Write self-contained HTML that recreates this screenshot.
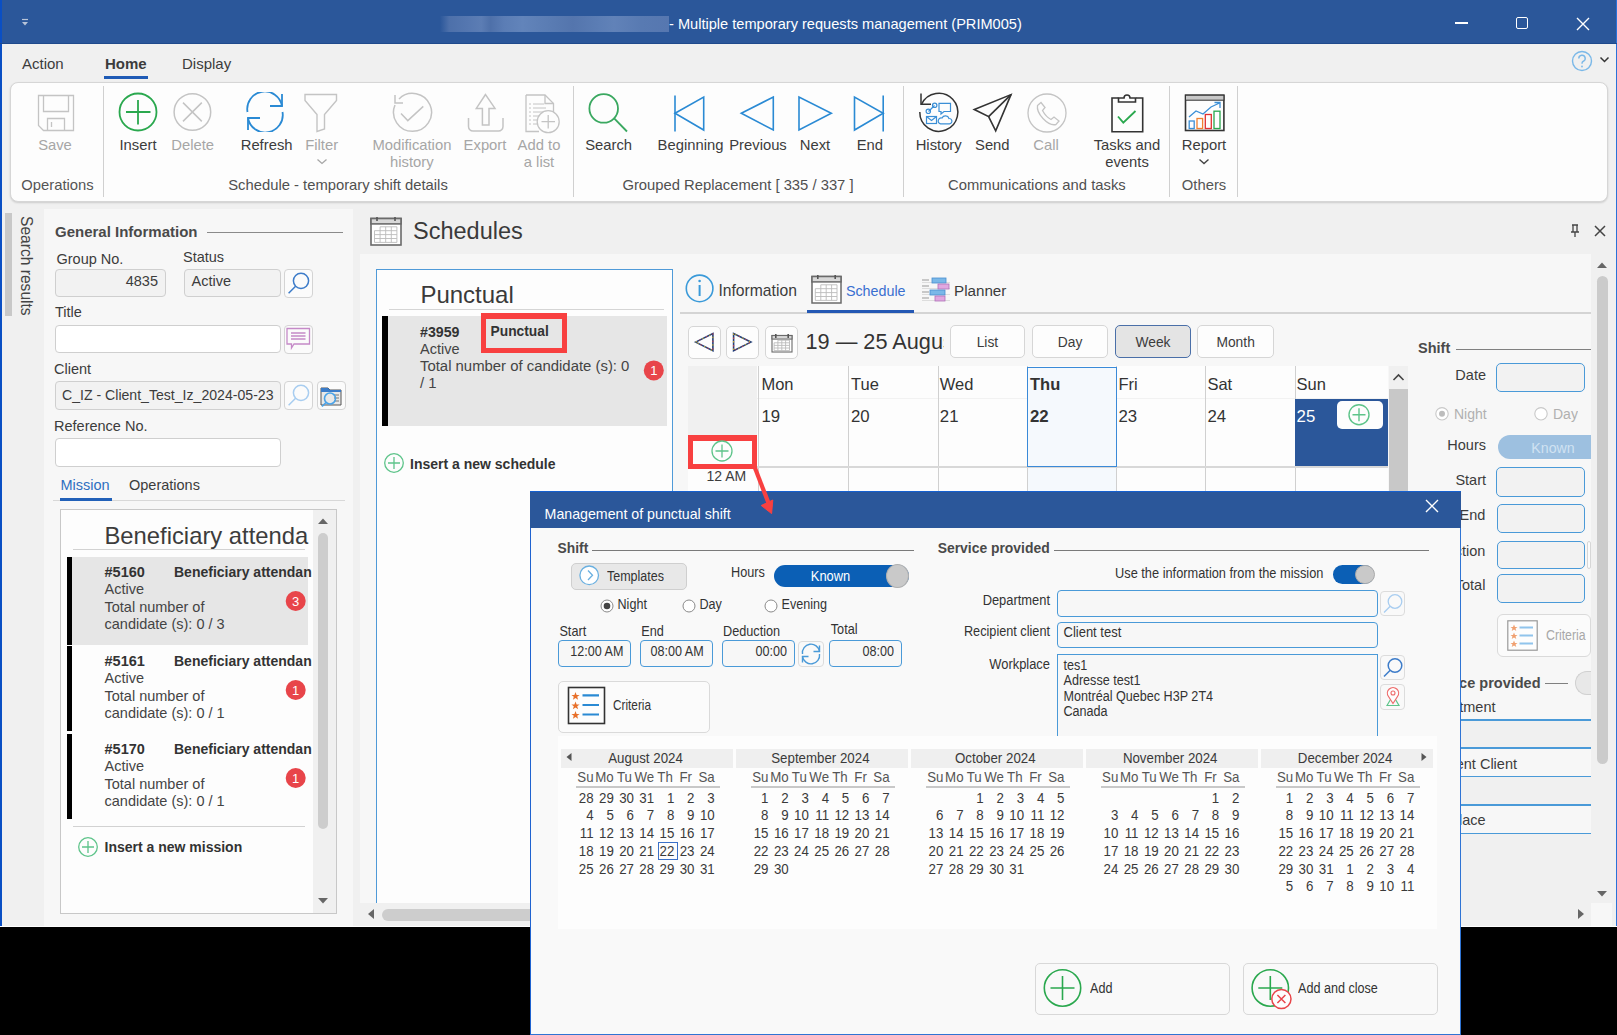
<!DOCTYPE html><html><head><meta charset="utf-8"><style>
html,body{margin:0;padding:0;}
body{width:1617px;height:1035px;position:relative;overflow:hidden;background:#000;font-family:"Liberation Sans",sans-serif;}
.a{position:absolute;box-sizing:border-box;}
.t{position:absolute;white-space:nowrap;line-height:1;}
</style></head><body>
<div class="a" style="left:0px;top:0px;width:1617px;height:927px;background:#f0f0f0;"></div>
<div class="a" style="left:0px;top:0px;width:1617px;height:44px;background:#2b579a;"></div>
<div class="a" style="left:0px;top:0px;width:2px;height:927px;background:#0a4fc4;"></div>
<div class="a" style="left:1616px;top:0px;width:1px;height:927px;background:#2a72d8;"></div>
<div class="a" style="left:0px;top:43px;width:1617px;height:1px;background:#1f4a8c;"></div>
<div class="a" style="left:0px;top:926px;width:1617px;height:1px;background:#fff;"></div>
<svg class="a" style="left:19px;top:17px;" width="12" height="12" viewBox="0 0 12 12"><path d="M3 2.5H9" stroke="#b8c4d8" stroke-width="1.2"/><path d="M3 5L6 8.5L9 5Z" fill="#b8c4d8"/></svg>
<div class="a" style="left:440px;top:15.6px;width:229px;height:16px;background:linear-gradient(90deg,rgba(43,87,154,1) 0%,#4d70aa 4%,#5577b0 12%,#5c7db4 18%,#4e70a9 22%,#5b7db5 28%,#6284ba 36%,#5a7cb3 48%,#5475ad 58%,#5c7eb5 70%,#6182b8 76%,#587ab2 88%,#5677b0 100%);"></div>
<div class="t" style="left:669px;top:16.64px;font-size:14.6px;color:#ffffff;">- Multiple temporary requests management (PRIM005)</div>
<div class="a" style="left:1455.3px;top:22px;width:12.3px;height:1.5px;background:#fff;"></div>
<div class="a" style="left:1516.3px;top:17.3px;width:12.2px;height:11.6px;border:1.4px solid #fff;border-radius:2px;"></div>
<svg class="a" style="left:1576px;top:16.5px;" width="14" height="14" viewBox="0 0 14 14"><path d="M1 1L13 13M13 1L1 13" stroke="#fff" stroke-width="1.4"/></svg>
<div class="t" style="left:22px;top:56.30px;font-size:15px;color:#3c3c3c;">Action</div>
<div class="t" style="left:105px;top:56.30px;font-size:15px;color:#3c3c3c;font-weight:bold;">Home</div>
<div class="a" style="left:104px;top:76px;width:44px;height:3px;background:#1f5bb6;"></div>
<div class="t" style="left:182px;top:56.30px;font-size:15px;color:#3c3c3c;">Display</div>
<div class="a" style="left:10px;top:82px;width:1598px;height:120px;background:#fdfdfd;border:1px solid #d6d6d6;border-radius:8px;box-shadow:0 1px 2px rgba(0,0,0,0.15);"></div>
<div class="a" style="left:103px;top:86px;width:1px;height:111px;background:#d0d0d0;"></div>
<div class="a" style="left:573px;top:86px;width:1px;height:111px;background:#d0d0d0;"></div>
<div class="a" style="left:903px;top:86px;width:1px;height:111px;background:#d0d0d0;"></div>
<div class="a" style="left:1169px;top:86px;width:1px;height:111px;background:#d0d0d0;"></div>
<div class="a" style="left:1237px;top:86px;width:1px;height:111px;background:#d0d0d0;"></div>
<svg class="a" style="left:36px;top:93px;" width="40" height="40" viewBox="0 0 40 40"><g fill="none" stroke="#c4c4c4" stroke-width="1.3"><path d="M2.5 2.5H37.5V37.5H7.5L2.5 32.5Z"/><path d="M7.5 2.5V18.5H32.5V2.5"/><path d="M11.5 37.5V25.5H28.5V37.5"/><path d="M15.5 29V34"/></g></svg>
<div class="t" style="left:-345px;width:800px;text-align:center;top:137.97px;font-size:14.8px;color:#a6a6a6;">Save</div>
<svg class="a" style="left:118px;top:92px;" width="40" height="40" viewBox="0 0 40 40"><g fill="none" stroke="#2aa84e" stroke-width="1.8"><circle cx="20" cy="20" r="18.5"/><path d="M8 20H32.5M20 8V32.5"/></g></svg>
<div class="t" style="left:-262px;width:800px;text-align:center;top:137.97px;font-size:14.8px;color:#3c3c3c;">Insert</div>
<svg class="a" style="left:172px;top:92px;" width="40" height="40" viewBox="0 0 40 40"><g fill="none" stroke="#c4c4c4" stroke-width="1.5"><circle cx="20.4" cy="20" r="18.3"/><path d="M11 10.6L29.8 29.4M29.8 10.6L11 29.4"/></g></svg>
<div class="t" style="left:-207.3px;width:800px;text-align:center;top:137.97px;font-size:14.8px;color:#a6a6a6;">Delete</div>
<svg class="a" style="left:245px;top:92px;" width="40" height="40" viewBox="0 0 40 40"><g fill="none" stroke="#2a8ad4" stroke-width="1.8"><path d="M2.5 20A17.5 17.5 0 0 1 37 14"/><path d="M37 2V14H25"/><path d="M37.5 20A17.5 17.5 0 0 1 3 26"/><path d="M3 38V26H15"/></g></svg>
<div class="t" style="left:-133.39999999999998px;width:800px;text-align:center;top:137.97px;font-size:14.8px;color:#3c3c3c;">Refresh</div>
<svg class="a" style="left:303px;top:92px;" width="36" height="42" viewBox="0 0 36 42"><g fill="none" stroke="#c4c4c4" stroke-width="1.4"><path d="M2 2.5H33.5V8.5L21.5 22.5V37L14 39.5V22.5L2 8.5Z"/></g></svg>
<div class="t" style="left:-78.30000000000001px;width:800px;text-align:center;top:137.97px;font-size:14.8px;color:#a6a6a6;">Filter</div>
<svg class="a" style="left:316px;top:158px;" width="12" height="7" viewBox="0 0 12 7"><path d="M1.5 1.5L6 5.5L10.5 1.5" fill="none" stroke="#a6a6a6" stroke-width="1.3"/></svg>
<svg class="a" style="left:390px;top:92px;" width="44" height="44" viewBox="0 0 44 44"><g fill="none" stroke="#c4c4c4" stroke-width="1.5"><path d="M9 7A19 19 0 1 1 5 13"/><path d="M5 3V11H13"/><path d="M11 21.5L17.8 28.6L33.3 14.4"/></g></svg>
<div class="t" style="left:11.899999999999977px;width:800px;text-align:center;top:137.97px;font-size:14.8px;color:#a6a6a6;">Modification</div>
<div class="t" style="left:11.899999999999977px;width:800px;text-align:center;top:154.97px;font-size:14.8px;color:#a6a6a6;">history</div>
<svg class="a" style="left:466px;top:92px;" width="40" height="42" viewBox="0 0 40 42"><g fill="none" stroke="#c4c4c4" stroke-width="1.5"><path d="M2.5 26V34.5A4.5 4.5 0 0 0 7 39H32.5A4.5 4.5 0 0 0 37 34.5V26"/><path d="M19.5 2.5L10.3 16.4H16.4V33H23V16.4H29Z"/></g></svg>
<div class="t" style="left:85px;width:800px;text-align:center;top:137.97px;font-size:14.8px;color:#a6a6a6;">Export</div>
<svg class="a" style="left:524px;top:93px;" width="42" height="42" viewBox="0 0 42 42"><g fill="none" stroke="#c4c4c4" stroke-width="1.3"><path d="M2 2H21L29.5 10.5V26"/><path d="M21 2V10.5H29.5"/><path d="M2 2V38.5H15"/><path d="M5 11H7M5 15H7M5 19H7M5 23H7M5 27H7M5 31H7M9 11H20M9 15H22M9 19H22M9 23H17M9 27H14M9 31H14" stroke-width="1"/><circle cx="24.2" cy="28.7" r="11" fill="#fdfdfd"/><path d="M17.5 28.7H31M24.2 22V35.5"/></g></svg>
<div class="t" style="left:139px;width:800px;text-align:center;top:137.97px;font-size:14.8px;color:#a6a6a6;">Add to</div>
<div class="t" style="left:139px;width:800px;text-align:center;top:154.97px;font-size:14.8px;color:#a6a6a6;">a list</div>
<div class="t" style="left:-342.5px;width:800px;text-align:center;top:177.97px;font-size:14.8px;color:#555;">Operations</div>

<div class="t" style="left:-62px;width:800px;text-align:center;top:177.97px;font-size:14.8px;color:#505050;">Schedule - temporary shift details</div>
<svg class="a" style="left:586px;top:92px;" width="44" height="42" viewBox="0 0 44 42"><g fill="none" stroke="#3aa860" stroke-width="1.8"><circle cx="17.7" cy="16.4" r="14.3"/><path d="M28.2 26.4L41 39.5"/></g></svg>
<div class="t" style="left:208.60000000000002px;width:800px;text-align:center;top:137.97px;font-size:14.8px;color:#3c3c3c;">Search</div>
<svg class="a" style="left:670px;top:92px;" width="40" height="42" viewBox="0 0 40 42"><g fill="none" stroke="#2a8ad4" stroke-width="1.6"><path d="M5 3.5V39.5"/><path d="M5 21.3L33.7 5V38Z"/></g></svg>
<div class="t" style="left:290.5px;width:800px;text-align:center;top:137.97px;font-size:14.8px;color:#3c3c3c;">Beginning</div>
<svg class="a" style="left:736px;top:92px;" width="42" height="42" viewBox="0 0 42 42"><g fill="none" stroke="#2a8ad4" stroke-width="1.6"><path d="M5.3 21.3L37.3 5V38Z"/></g></svg>
<div class="t" style="left:358px;width:800px;text-align:center;top:137.97px;font-size:14.8px;color:#3c3c3c;">Previous</div>
<svg class="a" style="left:794px;top:92px;" width="42" height="42" viewBox="0 0 42 42"><g fill="none" stroke="#2a8ad4" stroke-width="1.6"><path d="M5 5V38L37.3 21.3Z"/></g></svg>
<div class="t" style="left:415px;width:800px;text-align:center;top:137.97px;font-size:14.8px;color:#3c3c3c;">Next</div>
<svg class="a" style="left:850px;top:92px;" width="40" height="42" viewBox="0 0 40 42"><g fill="none" stroke="#2a8ad4" stroke-width="1.6"><path d="M33.2 3.5V39.5"/><path d="M4.5 5V38L33.2 21.3Z"/></g></svg>
<div class="t" style="left:469.79999999999995px;width:800px;text-align:center;top:137.97px;font-size:14.8px;color:#3c3c3c;">End</div>
<div class="t" style="left:338px;width:800px;text-align:center;top:177.97px;font-size:14.8px;color:#505050;">Grouped Replacement [ 335 / 337 ]</div>
<svg class="a" style="left:916px;top:91px;" width="46" height="46" viewBox="0 0 46 46"><g fill="none" stroke="#333" stroke-width="1.5"><path d="M5.6 13.2A19 19 0 1 1 3.8 21"/><path d="M5 2.5V13.3H15"/></g><g fill="none" stroke="#3b8fd6" stroke-width="1.2"><path d="M12.5 20.5L18.5 14.5"/><circle cx="12.3" cy="20.3" r="2.2"/><circle cx="18.7" cy="14.3" r="2.2"/><path d="M23 12.3H34.5V20.5H28L25 23V20.5H23Z"/><rect x="10.5" y="25.5" width="10" height="7"/><path d="M10.5 25.5L15.5 29.5L20.5 25.5"/><path d="M24.5 32.8H33.5A2.6 2.6 0 0 0 33 27.5A3.8 3.8 0 0 0 26 27A2.9 2.9 0 0 0 24.5 32.8Z"/></g></svg>
<div class="t" style="left:538.7px;width:800px;text-align:center;top:137.97px;font-size:14.8px;color:#3c3c3c;">History</div>
<svg class="a" style="left:972px;top:92px;" width="42" height="42" viewBox="0 0 42 42"><g fill="none" stroke="#333" stroke-width="1.6" stroke-linejoin="miter"><path d="M2.3 17.5L39 2.6L23.7 38.9L16.6 24.6Z"/><path d="M16.6 24.6L39 2.6"/></g></svg>
<div class="t" style="left:592.3px;width:800px;text-align:center;top:137.97px;font-size:14.8px;color:#3c3c3c;">Send</div>
<svg class="a" style="left:1026px;top:92px;" width="42" height="42" viewBox="0 0 42 42"><g fill="none" stroke="#c4c4c4" stroke-width="1.3"><circle cx="21" cy="21" r="19"/><path d="M11.5 13.5L15 10.5L19 15.5L16.5 18.5Q20 25 25 27.5L28 25L33 29L30 32.5Q24 34 17 26.5Q10.5 19.5 11.5 13.5Z"/></g></svg>
<div class="t" style="left:646px;width:800px;text-align:center;top:137.97px;font-size:14.8px;color:#a6a6a6;">Call</div>
<svg class="a" style="left:1108px;top:91px;" width="38" height="44" viewBox="0 0 38 44"><g fill="none" stroke="#333" stroke-width="1.6"><path d="M10.5 7H4V40.8H34.7V7H28"/><path d="M10.5 7V11H27.5V7H22A3 3 0 0 0 16 7Z"/></g><path d="M10 25.5L15.3 31.7L27.5 20" fill="none" stroke="#2aa84e" stroke-width="1.8"/></svg>
<div class="t" style="left:727px;width:800px;text-align:center;top:137.97px;font-size:14.8px;color:#3c3c3c;">Tasks and</div>
<div class="t" style="left:727px;width:800px;text-align:center;top:154.97px;font-size:14.8px;color:#3c3c3c;">events</div>
<div class="t" style="left:636.9000000000001px;width:800px;text-align:center;top:177.97px;font-size:14.8px;color:#505050;">Communications and tasks</div>
<svg class="a" style="left:1183px;top:92px;" width="44" height="42" viewBox="0 0 44 42"><rect x="2.5" y="3.2" width="38.4" height="35.3" fill="none" stroke="#333" stroke-width="1.6"/><rect x="2.5" y="3.2" width="38.4" height="5" fill="#c8c8c8" stroke="#333" stroke-width="1"/><rect x="6.2" y="29" width="5" height="7.5" fill="none" stroke="#3b8fd6" stroke-width="1.3"/><rect x="14" y="26.5" width="5.6" height="10" fill="none" stroke="#f08030" stroke-width="1.3"/><rect x="22.3" y="22.5" width="6" height="14" fill="none" stroke="#e03030" stroke-width="1.3"/><rect x="31" y="19.2" width="6" height="17.3" fill="none" stroke="#2aa84e" stroke-width="1.3"/><path d="M6 25L13 19L20 22L28 15L36.5 11M31.5 10.5H37V16" fill="none" stroke="#3b8fd6" stroke-width="1.3"/></svg>
<div class="t" style="left:804px;width:800px;text-align:center;top:137.97px;font-size:14.8px;color:#3c3c3c;">Report</div>
<svg class="a" style="left:1198px;top:158px;" width="12" height="7" viewBox="0 0 12 7"><path d="M1.5 1.5L6 5.5L10.5 1.5" fill="none" stroke="#444" stroke-width="1.4"/></svg>
<div class="t" style="left:804px;width:800px;text-align:center;top:177.97px;font-size:14.8px;color:#555;">Others</div>
<svg class="a" style="left:1571px;top:50px;" width="22" height="22" viewBox="0 0 22 22"><circle cx="11" cy="11" r="9.5" fill="none" stroke="#7ab8e8" stroke-width="1.4"/><path d="M7.8 8.5A3.2 3.2 0 1 1 12 11.5Q11 12 11 13.8" fill="none" stroke="#7ab8e8" stroke-width="1.4"/><circle cx="11" cy="16.5" r="0.9" fill="#7ab8e8"/></svg>
<svg class="a" style="left:1599px;top:56px;" width="12" height="8" viewBox="0 0 12 8"><path d="M1.5 1.5L5.5 5.5L9.5 1.5" fill="none" stroke="#333" stroke-width="1.5"/></svg>
<div class="a" style="left:44px;top:209px;width:309px;height:717px;background:#f7f7f7;"></div>
<div class="a" style="left:5px;top:212.5px;width:7px;height:103px;background:#c8c8c8;"></div>
<div class="a" style="left:360px;top:254px;width:1231px;height:672px;background:#f7f7f7;"></div>
<div class="t" style="left:26px;top:216px;font-size:15.6px;color:#444;transform-origin:0 0;transform:rotate(90deg) translate(0,-7.5px);">Search results</div>
<div class="t" style="left:55px;top:224.30px;font-size:15px;color:#4a4a4a;font-weight:bold;">General Information</div>
<div class="a" style="left:207px;top:232px;width:136px;height:1px;background:#8a8a8a;"></div>
<div class="t" style="left:56.5px;top:251.73px;font-size:14.5px;color:#3c3c3c;">Group No.</div>
<div class="t" style="left:183px;top:249.73px;font-size:14.5px;color:#3c3c3c;">Status</div>
<div class="a" style="left:55px;top:269px;width:111px;height:28px;background:#f2f2f2;border:1px solid #cfcfcf;border-radius:4px;"></div>
<div class="t" style="right:1459px;top:274.23px;font-size:14.5px;color:#3c3c3c;">4835</div>
<div class="a" style="left:184px;top:269px;width:97px;height:28px;background:#f2f2f2;border:1px solid #cfcfcf;border-radius:4px;"></div>
<div class="t" style="left:191.5px;top:274.23px;font-size:14.5px;color:#3c3c3c;">Active</div>
<div class="a" style="left:284px;top:269px;width:29px;height:29px;background:#fbfbfb;border:1px solid #d4d4d4;border-radius:4px;"></div>
<svg class="a" style="left:284.5px;top:269.5px;" width="28" height="28" viewBox="0 0 28 28"><g fill="none" stroke="#3d7cc9" stroke-width="1.5"><circle cx="16" cy="10.8" r="7.6"/><path d="M10.6 16.2L3.6 23.3"/></g></svg>
<div class="t" style="left:55px;top:305.23px;font-size:14.5px;color:#3c3c3c;">Title</div>
<div class="a" style="left:55px;top:325px;width:226px;height:28px;background:#ffffff;border:1px solid #cfcfcf;border-radius:4px;"></div>
<div class="a" style="left:284px;top:325px;width:29px;height:29px;background:#fbfbfb;border:1px solid #d4d4d4;border-radius:4px;"></div>
<svg class="a" style="left:284px;top:325px;" width="29" height="29" viewBox="0 0 29 29"><g fill="none" stroke="#c58ac8" stroke-width="1.3"><path d="M3 3.5H25.5V19H10L7.5 23V19H3Z"/><path d="M7 8H21.5M7 11H21.5M7 14H21.5" stroke-width="1.6"/></g></svg>
<div class="t" style="left:54px;top:361.73px;font-size:14.5px;color:#3c3c3c;">Client</div>
<div class="a" style="left:55px;top:381px;width:226px;height:29px;background:#f2f2f2;border:1px solid #cfcfcf;border-radius:4px;"></div>
<div class="t" style="left:62px;top:387.56px;font-size:14.1px;color:#3c3c3c;">C_IZ - Client_Test_Iz_2024-05-23</div>
<div class="a" style="left:284px;top:381px;width:29px;height:29px;background:#fbfbfb;border:1px solid #d4d4d4;border-radius:4px;"></div>
<svg class="a" style="left:284.5px;top:381.5px;" width="28" height="28" viewBox="0 0 28 28"><g fill="none" stroke="#a8cdf0" stroke-width="1.5"><circle cx="16" cy="10.8" r="7.6"/><path d="M10.6 16.2L3.6 23.3"/></g></svg>
<div class="a" style="left:316.5px;top:381px;width:29px;height:29px;background:#fbfbfb;border:1px solid #d4d4d4;border-radius:4px;"></div>
<svg class="a" style="left:316.5px;top:381.5px;" width="29" height="29" viewBox="0 0 29 29"><path d="M4 6H11L13 8H24V23H4Z" fill="#e8e8e8" stroke="#555" stroke-width="1"/><path d="M4 6H11L13 8H24V10H4Z" fill="#3b7cc9"/><path d="M17 13H22M17 16H22M17 19H22" stroke="#777" stroke-width="1"/><circle cx="13" cy="16.5" r="5.5" fill="none" stroke="#4aa3e8" stroke-width="1.6"/><path d="M9 20.5L5 24.5" stroke="#4aa3e8" stroke-width="1.6"/></svg>
<div class="t" style="left:54px;top:419.23px;font-size:14.5px;color:#3c3c3c;">Reference No.</div>
<div class="a" style="left:55px;top:438px;width:226px;height:29px;background:#ffffff;border:1px solid #cfcfcf;border-radius:4px;"></div>
<div class="t" style="left:60.5px;top:478.23px;font-size:14.5px;color:#2f6fc0;">Mission</div>
<div class="t" style="left:129px;top:478.23px;font-size:14.5px;color:#3c3c3c;">Operations</div>
<div class="a" style="left:52.5px;top:500px;width:292px;height:1px;background:#d8d8d8;"></div>
<div class="a" style="left:60px;top:498px;width:52px;height:2.5px;background:#2160b8;"></div>
<div class="a" style="left:60px;top:509px;width:277px;height:405px;background:#fdfdfd;border:1px solid #c8c8c8;"></div>
<div class="a" style="left:313px;top:510px;width:23px;height:403px;background:#f0f0f0;"></div>
<svg class="a" style="left:316px;top:516px;" width="14" height="10" viewBox="0 0 14 10"><path d="M2 8L7 2.5L12 8Z" fill="#666"/></svg>
<div class="a" style="left:318px;top:533px;width:10px;height:296px;background:#cdcdcd;border-radius:5px;"></div>
<svg class="a" style="left:316px;top:896px;" width="14" height="10" viewBox="0 0 14 10"><path d="M2 2L7 7.5L12 2Z" fill="#666"/></svg>
<div class="t" style="left:104.5px;top:524.35px;font-size:23.8px;color:#3c3c3c;width:208px;overflow:hidden;padding-bottom:5px;">Beneficiary attenda</div>
<div class="a" style="left:73px;top:549px;width:232px;height:1px;background:#d2d2d2;"></div>
<div class="a" style="left:72px;top:556.5px;width:236px;height:88px;background:#e6e6e6;"></div>
<div class="a" style="left:66.5px;top:556.5px;width:5.5px;height:88px;background:#000;"></div>
<div class="t" style="left:104.5px;top:564.73px;font-size:14.5px;color:#333;font-weight:bold;">#5160</div>
<div class="t" style="left:174px;top:565.15px;font-size:14px;color:#333;font-weight:bold;width:138px;overflow:hidden;padding-bottom:5px;">Beneficiary attendan</div>
<div class="t" style="left:104.5px;top:582.43px;font-size:14.5px;color:#444;">Active</div>
<div class="t" style="left:104.5px;top:599.73px;font-size:14.5px;color:#444;">Total number of</div>
<div class="t" style="left:104.5px;top:616.73px;font-size:14.5px;color:#444;">candidate (s): 0 / 3</div>
<svg class="a" style="left:285px;top:591.0px;" width="22" height="22" viewBox="0 0 22 22"><circle cx="10.7" cy="10" r="10" fill="#e8454a"/><text x="10.7" y="14.6" font-size="13" font-family="Liberation Sans" fill="#fff" text-anchor="middle">3</text></svg>
<div class="a" style="left:66.5px;top:645.5px;width:5.5px;height:85.5px;background:#000;"></div>
<div class="t" style="left:104.5px;top:653.73px;font-size:14.5px;color:#333;font-weight:bold;">#5161</div>
<div class="t" style="left:174px;top:654.15px;font-size:14px;color:#333;font-weight:bold;width:138px;overflow:hidden;padding-bottom:5px;">Beneficiary attendan</div>
<div class="t" style="left:104.5px;top:671.43px;font-size:14.5px;color:#444;">Active</div>
<div class="t" style="left:104.5px;top:688.73px;font-size:14.5px;color:#444;">Total number of</div>
<div class="t" style="left:104.5px;top:705.73px;font-size:14.5px;color:#444;">candidate (s): 0 / 1</div>
<svg class="a" style="left:285px;top:680.0px;" width="22" height="22" viewBox="0 0 22 22"><circle cx="10.7" cy="10" r="10" fill="#e8454a"/><text x="10.7" y="14.6" font-size="13" font-family="Liberation Sans" fill="#fff" text-anchor="middle">1</text></svg>
<div class="a" style="left:66.5px;top:733.5px;width:5.5px;height:85.5px;background:#000;"></div>
<div class="t" style="left:104.5px;top:741.73px;font-size:14.5px;color:#333;font-weight:bold;">#5170</div>
<div class="t" style="left:174px;top:742.15px;font-size:14px;color:#333;font-weight:bold;width:138px;overflow:hidden;padding-bottom:5px;">Beneficiary attendan</div>
<div class="t" style="left:104.5px;top:759.43px;font-size:14.5px;color:#444;">Active</div>
<div class="t" style="left:104.5px;top:776.73px;font-size:14.5px;color:#444;">Total number of</div>
<div class="t" style="left:104.5px;top:793.73px;font-size:14.5px;color:#444;">candidate (s): 0 / 1</div>
<svg class="a" style="left:285px;top:768.0px;" width="22" height="22" viewBox="0 0 22 22"><circle cx="10.7" cy="10" r="10" fill="#e8454a"/><text x="10.7" y="14.6" font-size="13" font-family="Liberation Sans" fill="#fff" text-anchor="middle">1</text></svg>
<div class="a" style="left:73px;top:826px;width:232px;height:1px;background:#d2d2d2;"></div>
<svg class="a" style="left:77px;top:836px;" width="22" height="22" viewBox="0 0 22 22"><g fill="none" stroke="#5ec48a" stroke-width="1.3"><circle cx="11" cy="11" r="9.3"/><path d="M5 11H17M11 5V17"/></g></svg>
<div class="t" style="left:104.5px;top:839.65px;font-size:14px;color:#333;font-weight:bold;">Insert a new mission</div>
<svg class="a" style="left:370px;top:216px;" width="32" height="30" viewBox="0 0 32 30"><rect x="1" y="2.5" width="30" height="26.5" fill="#fff" stroke="#6a6a6a" stroke-width="1.6"/><rect x="1" y="2.5" width="30" height="5.4" fill="#d8d8d8" stroke="#6a6a6a" stroke-width="1.6"/><path d="M7.0 1V5M25.0 1V5" stroke="#555" stroke-width="1.6"/><path d="M4.5 14.7V26.4" stroke="#bbb" stroke-width="0.9"/><path d="M10.1 10.8V26.4" stroke="#bbb" stroke-width="0.9"/><path d="M15.7 10.8V26.4" stroke="#bbb" stroke-width="0.9"/><path d="M21.3 10.8V26.4" stroke="#bbb" stroke-width="0.9"/><path d="M26.9 10.8V26.4" stroke="#bbb" stroke-width="0.9"/><path d="M10.1 10.8H26.9" stroke="#bbb" stroke-width="0.9"/><path d="M4.5 14.7H26.9" stroke="#bbb" stroke-width="0.9"/><path d="M4.5 18.6H26.9" stroke="#bbb" stroke-width="0.9"/><path d="M4.5 22.5H26.9" stroke="#bbb" stroke-width="0.9"/><path d="M4.5 26.4H26.9" stroke="#bbb" stroke-width="0.9"/></svg>
<div class="t" style="left:413px;top:220.11px;font-size:23.5px;color:#3a3a3a;">Schedules</div>
<div class="a" style="left:375.5px;top:268.5px;width:297.5px;height:640px;background:#fdfdfd;border:1px solid #4f9ad8;"></div>
<div class="t" style="left:420.4px;top:282.68px;font-size:24px;color:#3a3a3a;">Punctual</div>
<div class="a" style="left:388.5px;top:308.5px;width:275px;height:1.2px;background:#d5d5d5;"></div>
<div class="a" style="left:387.5px;top:316px;width:279.5px;height:109.5px;background:#e6e6e6;"></div>
<div class="a" style="left:382px;top:316px;width:5.5px;height:109.5px;background:#000;"></div>
<div class="t" style="left:420px;top:324.98px;font-size:14.2px;color:#333;font-weight:bold;">#3959</div>
<div class="t" style="left:490.5px;top:325.12px;font-size:13.8px;color:#333;font-weight:bold;">Punctual</div>
<div class="a" style="left:481px;top:313px;width:86px;height:39.7px;border:5px solid #f84040;border-top-width:6px;"></div>
<div class="t" style="left:420px;top:341.73px;font-size:14.5px;color:#444;">Active</div>
<div class="t" style="left:420px;top:358.99px;font-size:14.9px;color:#444;">Total number of candidate (s): 0</div>
<div class="t" style="left:420px;top:375.99px;font-size:14.9px;color:#444;">/ 1</div>
<svg class="a" style="left:643px;top:360px;" width="22" height="22" viewBox="0 0 22 22"><circle cx="10.8" cy="10.4" r="10" fill="#e8454a"/><text x="10.8" y="15" font-size="13" font-family="Liberation Sans" fill="#fff" text-anchor="middle">1</text></svg>
<svg class="a" style="left:383px;top:452px;" width="22" height="22" viewBox="0 0 22 22"><g fill="none" stroke="#5ec48a" stroke-width="1.3"><circle cx="11" cy="11" r="9.3"/><path d="M5 11H17M11 5V17"/></g></svg>
<div class="t" style="left:410px;top:457.15px;font-size:14px;color:#333;font-weight:bold;">Insert a new schedule</div>
<div class="a" style="left:360px;top:903px;width:1231px;height:23px;background:#f0f0f0;"></div>
<svg class="a" style="left:364px;top:906px;" width="14" height="16" viewBox="0 0 14 16"><path d="M10 3L4 8L10 13Z" fill="#666"/></svg>
<div class="a" style="left:382px;top:909px;width:800px;height:11.5px;background:#cdcdcd;border-radius:6px;"></div>
<svg class="a" style="left:1574px;top:906px;" width="14" height="16" viewBox="0 0 14 16"><path d="M4 3L10 8L4 13Z" fill="#666"/></svg>
<svg class="a" style="left:685px;top:274px;" width="29" height="29" viewBox="0 0 29 29"><circle cx="14.6" cy="14.4" r="13.3" fill="none" stroke="#3a9ad9" stroke-width="1.6"/><circle cx="14.6" cy="7" r="1.3" fill="#3a9ad9"/><path d="M14.6 11V22" stroke="#3a9ad9" stroke-width="2"/></svg>
<div class="t" style="left:718.4px;top:282.71px;font-size:15.7px;color:#3c3c3c;">Information</div>
<svg class="a" style="left:811px;top:274px;" width="31" height="30" viewBox="0 0 31 30"><rect x="1" y="2.5" width="29" height="26.5" fill="#fff" stroke="#6a6a6a" stroke-width="1.5"/><rect x="1" y="2.5" width="29" height="5.4" fill="#d8d8d8" stroke="#6a6a6a" stroke-width="1.5"/><path d="M6.8 1V5M24.2 1V5" stroke="#555" stroke-width="1.6"/><path d="M4.3 14.7V26.4" stroke="#bbb" stroke-width="0.9"/><path d="M9.8 10.8V26.4" stroke="#bbb" stroke-width="0.9"/><path d="M15.2 10.8V26.4" stroke="#bbb" stroke-width="0.9"/><path d="M20.6 10.8V26.4" stroke="#bbb" stroke-width="0.9"/><path d="M26.0 10.8V26.4" stroke="#bbb" stroke-width="0.9"/><path d="M9.8 10.8H26.0" stroke="#bbb" stroke-width="0.9"/><path d="M4.3 14.7H26.0" stroke="#bbb" stroke-width="0.9"/><path d="M4.3 18.6H26.0" stroke="#bbb" stroke-width="0.9"/><path d="M4.3 22.5H26.0" stroke="#bbb" stroke-width="0.9"/><path d="M4.3 26.4H26.0" stroke="#bbb" stroke-width="0.9"/></svg>
<div class="t" style="left:845.9px;top:283.90px;font-size:14.3px;color:#3a6fd0;">Schedule</div>
<svg class="a" style="left:921px;top:277px;" width="30" height="26" viewBox="0 0 30 26"><g stroke="#999" stroke-width="1"><path d="M1 3H8M1 9H8M1 15H8M1 21H8"/><path d="M1 5.5H29M1 11.5H29M1 17.5H29M1 23.5H29" stroke="#ddd"/></g><rect x="11" y="1" width="14" height="5" fill="#7ab8e8" stroke="#4a90d0" stroke-width="0.8"/><rect x="17" y="7" width="11" height="5" fill="#e0a8e0" stroke="#b070b8" stroke-width="0.8"/><rect x="9" y="13" width="15" height="5" fill="#7ab8e8" stroke="#4a90d0" stroke-width="0.8"/><rect x="14" y="19" width="10" height="5" fill="#e0a8e0" stroke="#b070b8" stroke-width="0.8"/></svg>
<div class="t" style="left:954px;top:283.13px;font-size:15.2px;color:#3c3c3c;">Planner</div>
<div class="a" style="left:680px;top:312px;width:911px;height:1.5px;background:#d4d4d4;"></div>
<div class="a" style="left:806.5px;top:309.5px;width:107.5px;height:3.5px;background:#2458b4;"></div>
<div class="a" style="left:687.8px;top:325.5px;width:33px;height:33px;background:#fdfdfd;border:1px solid #d6d6d6;border-radius:5px;"></div>
<div class="a" style="left:726.4px;top:325.5px;width:33px;height:33px;background:#fdfdfd;border:1px solid #d6d6d6;border-radius:5px;"></div>
<div class="a" style="left:765.2px;top:325.5px;width:33px;height:33px;background:#fdfdfd;border:1px solid #d6d6d6;border-radius:5px;"></div>
<svg class="a" style="left:688px;top:326px;" width="33" height="33" viewBox="0 0 33 33"><path d="M7.6 16.1L24.9 7.5V24.8Z" fill="none" stroke="#24407a" stroke-width="1.6"/><path d="M7.6 16.1L24.9 7.5V24.8Z" fill="none" stroke="#d8b020" stroke-width="1" stroke-dasharray="1.5 6"/><path d="M7.6 16.1L24.9 7.5V24.8Z" fill="none" stroke="#d04040" stroke-width="1" stroke-dasharray="1.5 6" stroke-dashoffset="3.5"/></svg>
<svg class="a" style="left:726.4px;top:326px;" width="33" height="33" viewBox="0 0 33 33"><path d="M7.6 7.5V24.8L24.9 16.1Z" fill="none" stroke="#24407a" stroke-width="1.6"/><path d="M7.6 7.5V24.8L24.9 16.1Z" fill="none" stroke="#d8b020" stroke-width="1" stroke-dasharray="1.5 6"/><path d="M7.6 7.5V24.8L24.9 16.1Z" fill="none" stroke="#d04040" stroke-width="1" stroke-dasharray="1.5 6" stroke-dashoffset="3.5"/></svg>
<svg class="a" style="left:771px;top:333px;" width="22" height="20" viewBox="0 0 22 20"><rect x="1" y="2.5" width="20" height="16.5" fill="#fff" stroke="#6a6a6a" stroke-width="1.1"/><rect x="1" y="2.5" width="20" height="3.6" fill="#d8d8d8" stroke="#6a6a6a" stroke-width="1.1"/><path d="M4.8 1V5M17.2 1V5" stroke="#555" stroke-width="1.6"/><path d="M3.1 9.8V17.6" stroke="#bbb" stroke-width="0.9"/><path d="M6.9 7.2V17.6" stroke="#bbb" stroke-width="0.9"/><path d="M10.8 7.2V17.6" stroke="#bbb" stroke-width="0.9"/><path d="M14.6 7.2V17.6" stroke="#bbb" stroke-width="0.9"/><path d="M18.5 7.2V17.6" stroke="#bbb" stroke-width="0.9"/><path d="M6.9 7.2H18.5" stroke="#bbb" stroke-width="0.9"/><path d="M3.1 9.8H18.5" stroke="#bbb" stroke-width="0.9"/><path d="M3.1 12.4H18.5" stroke="#bbb" stroke-width="0.9"/><path d="M3.1 15.0H18.5" stroke="#bbb" stroke-width="0.9"/><path d="M3.1 17.6H18.5" stroke="#bbb" stroke-width="0.9"/></svg>
<div class="a" style="left:805px;top:320px;width:139px;height:40px;overflow:hidden;">
<div class="t" style="left:0.5px;top:11.03px;font-size:21.7px;color:#333;">19 — 25 August 2024</div>
</div>
<div class="a" style="left:949.5px;top:325.2px;width:75.90000000000009px;height:33px;background:#fdfdfd;border:1px solid #d6d6d6;border-radius:5px;"></div>
<div class="t" style="left:587.45px;width:800px;text-align:center;top:335.82px;font-size:13.8px;color:#3c3c3c;">List</div>
<div class="a" style="left:1031.7px;top:325.2px;width:76.79999999999995px;height:33px;background:#fdfdfd;border:1px solid #d6d6d6;border-radius:5px;"></div>
<div class="t" style="left:670.0999999999999px;width:800px;text-align:center;top:335.82px;font-size:13.8px;color:#3c3c3c;">Day</div>
<div class="a" style="left:1114.6px;top:325.2px;width:76.80000000000018px;height:33px;background:#e4e4e4;border:1.5px solid #4a6fa8;border-radius:5px;"></div>
<div class="t" style="left:753.0px;width:800px;text-align:center;top:335.82px;font-size:13.8px;color:#3c3c3c;">Week</div>
<div class="a" style="left:1197px;top:325.2px;width:77.29999999999995px;height:33px;background:#fdfdfd;border:1px solid #d6d6d6;border-radius:5px;"></div>
<div class="t" style="left:835.6500000000001px;width:800px;text-align:center;top:335.82px;font-size:13.8px;color:#3c3c3c;">Month</div>
<div class="a" style="left:688px;top:366px;width:700px;height:125px;background:#fdfdfd;"></div>
<div class="a" style="left:687.5px;top:366px;width:69.5px;height:69px;background:#f0f0f0;"></div>
<div class="a" style="left:757px;top:398px;width:631px;height:1px;background:#f2f2f2;"></div>
<div class="a" style="left:757.5px;top:366px;width:1.2px;height:125px;background:#d0d0d0;"></div>
<div class="a" style="left:848px;top:366px;width:1.2px;height:125px;background:#d0d0d0;"></div>
<div class="a" style="left:937.5px;top:366px;width:1.2px;height:125px;background:#d0d0d0;"></div>
<div class="a" style="left:1026.5px;top:366px;width:1.2px;height:125px;background:#d0d0d0;"></div>
<div class="a" style="left:1116px;top:366px;width:1.2px;height:125px;background:#d0d0d0;"></div>
<div class="a" style="left:1205px;top:366px;width:1.2px;height:125px;background:#d0d0d0;"></div>
<div class="a" style="left:1294.5px;top:366px;width:1.2px;height:125px;background:#d0d0d0;"></div>
<div class="a" style="left:688px;top:466px;width:700px;height:1.8px;background:#d8d8d8;"></div>
<div class="a" style="left:1026.5px;top:367px;width:90.5px;height:100px;background:#f5f9fd;border:1.5px solid #3a8ad8;"></div>
<div class="a" style="left:1027.7px;top:468px;width:88.3px;height:23px;background:#f5f9fd;"></div>
<div class="a" style="left:1294.5px;top:398.5px;width:93px;height:67.5px;background:#2b579a;"></div>
<div class="a" style="left:1336.5px;top:400.8px;width:46.5px;height:28.5px;background:#fdfdfd;border-radius:5px;"></div>
<svg class="a" style="left:1347px;top:403px;" width="24" height="24" viewBox="0 0 24 24"><g fill="none" stroke="#5ec48a" stroke-width="1.4"><circle cx="12" cy="11.7" r="10"/><path d="M5.5 11.7H18.5M12 5.2V18.2"/></g></svg>
<div class="t" style="left:761.4px;top:375.53px;font-size:16.5px;color:#333;">Mon</div>
<div class="t" style="left:761.4px;top:408.78px;font-size:16.8px;color:#333;">19</div>
<div class="t" style="left:851px;top:375.53px;font-size:16.5px;color:#333;">Tue</div>
<div class="t" style="left:851px;top:408.78px;font-size:16.8px;color:#333;">20</div>
<div class="t" style="left:939.8px;top:375.53px;font-size:16.5px;color:#333;">Wed</div>
<div class="t" style="left:939.8px;top:408.78px;font-size:16.8px;color:#333;">21</div>
<div class="t" style="left:1030px;top:375.53px;font-size:16.5px;color:#333;font-weight:bold;">Thu</div>
<div class="t" style="left:1030px;top:408.78px;font-size:16.8px;color:#333;font-weight:bold;">22</div>
<div class="t" style="left:1118.4px;top:375.53px;font-size:16.5px;color:#333;">Fri</div>
<div class="t" style="left:1118.4px;top:408.78px;font-size:16.8px;color:#333;">23</div>
<div class="t" style="left:1207.4px;top:375.53px;font-size:16.5px;color:#333;">Sat</div>
<div class="t" style="left:1207.4px;top:408.78px;font-size:16.8px;color:#333;">24</div>
<div class="t" style="left:1296.6px;top:375.53px;font-size:16.5px;color:#333;">Sun</div>
<div class="t" style="left:1296.6px;top:408.78px;font-size:16.8px;color:#ffffff;">25</div>
<div class="t" style="left:706.5px;top:469.35px;font-size:14px;color:#3c3c3c;">12 AM</div>
<div class="a" style="left:688px;top:434.8px;width:69px;height:34px;background:#fdfdfd;border:5px solid #f84040;border-top-width:6px;"></div>
<svg class="a" style="left:711px;top:440px;" width="22" height="22" viewBox="0 0 22 22"><g fill="none" stroke="#5ec48a" stroke-width="1.3"><circle cx="11" cy="11" r="10"/><path d="M4.5 11H17.5M11 4.5V17.5"/></g></svg>
<div class="a" style="left:1389px;top:366px;width:19px;height:125px;background:#f0f0f0;"></div>
<svg class="a" style="left:1390px;top:370px;" width="17" height="14" viewBox="0 0 17 14"><path d="M3.5 10L8.5 5L13.5 10" fill="none" stroke="#444" stroke-width="1.6"/></svg>
<div class="a" style="left:1389px;top:388.6px;width:18.7px;height:103px;background:#c8c8c8;"></div>
<svg class="a" style="left:1568px;top:223px;" width="14" height="16" viewBox="0 0 14 16"><path d="M4 2H10M5 2V9H9V2M3 9H11M7 9V14" fill="none" stroke="#444" stroke-width="1.3"/></svg>
<svg class="a" style="left:1593px;top:224px;" width="14" height="14" viewBox="0 0 14 14"><path d="M2 2L12 12M12 2L2 12" stroke="#444" stroke-width="1.5"/></svg>
<div class="t" style="left:1418px;top:341.23px;font-size:14.5px;color:#4a4a4a;font-weight:bold;">Shift</div>
<div class="a" style="left:1456px;top:348.5px;width:135px;height:1.2px;background:#808080;"></div>
<div class="t" style="right:131px;top:367.73px;font-size:14.5px;color:#3c3c3c;">Date</div>
<div class="a" style="left:1496px;top:362.7px;width:89px;height:29.5px;background:#f2f2f2;border:1.5px solid #4a9ad8;border-radius:5px;"></div>
<svg class="a" style="left:1432px;top:403px;" width="20" height="20" viewBox="0 0 20 20"><circle cx="10" cy="10.8" r="6.2" fill="#fff" stroke="#c8c8c8" stroke-width="1.1"/><circle cx="10" cy="10.8" r="3" fill="#bdbdbd"/></svg>
<div class="t" style="left:1454px;top:407.15px;font-size:14px;color:#b0b0b0;transform:scaleY(1.05);transform-origin:0 80%;">Night</div>
<svg class="a" style="left:1531.3px;top:403px;" width="20" height="20" viewBox="0 0 20 20"><circle cx="10" cy="10.8" r="6.2" fill="#fff" stroke="#c8c8c8" stroke-width="1.1"/></svg>
<div class="t" style="left:1553px;top:407.15px;font-size:14px;color:#b0b0b0;transform:scaleY(1.05);transform-origin:0 80%;">Day</div>
<div class="t" style="right:131px;top:437.73px;font-size:14.5px;color:#3c3c3c;">Hours</div>
<div class="a" style="left:1498px;top:434.8px;width:93px;height:24.6px;background:#9dc0e0;border-radius:12.3px 0 0 12.3px;"></div>
<div class="t" style="left:1153px;width:800px;text-align:center;top:440.98px;font-size:14.2px;color:#d0e2f2;">Known</div>
<div class="t" style="right:131px;top:472.73px;font-size:14.5px;color:#3c3c3c;">Start</div>
<div class="a" style="left:1496px;top:467.3px;width:89px;height:29.5px;background:#f2f2f2;border:1.5px solid #4a9ad8;border-radius:5px;"></div>
<div class="t" style="right:131.5999999999999px;top:507.73px;font-size:14.5px;color:#3c3c3c;">End</div>
<div class="a" style="left:1496.6px;top:504.2px;width:88px;height:29px;background:#f2f2f2;border:1.5px solid #4a9ad8;border-radius:5px;"></div>
<div class="t" style="right:131.5999999999999px;top:544.23px;font-size:14.5px;color:#3c3c3c;">Deduction</div>
<div class="a" style="left:1496.6px;top:540.7px;width:88px;height:28.5px;background:#f2f2f2;border:1.5px solid #4a9ad8;border-radius:5px;"></div>
<div class="a" style="left:1587px;top:540.7px;width:4px;height:28.5px;background:#fbfbfb;border:1px solid #d6d6d6;border-radius:4px;"></div>
<div class="t" style="right:131.5999999999999px;top:577.53px;font-size:14.5px;color:#3c3c3c;">Total</div>
<div class="a" style="left:1496.6px;top:574.2px;width:88px;height:28.5px;background:#f2f2f2;border:1.5px solid #4a9ad8;border-radius:5px;"></div>
<div class="a" style="left:1496.6px;top:613.7px;width:94.4px;height:43.6px;background:#fbfbfb;border:1px solid #dadada;border-radius:6px;"></div>
<svg class="a" style="left:1507px;top:619.5px;" width="31" height="31" viewBox="0 0 31 31"><rect x="0.8" y="0.8" width="29.4" height="29.4" fill="#fdfdfd" stroke="#999" stroke-width="1.2"/><g fill="#f0a070"><path d="M7 4.5L8 7H10.5L8.5 8.5L9.3 11L7 9.5L4.7 11L5.5 8.5L3.5 7H6Z"/><path d="M7 12.5L8 15H10.5L8.5 16.5L9.3 19L7 17.5L4.7 19L5.5 16.5L3.5 15H6Z"/><path d="M7 20.5L8 23H10.5L8.5 24.5L9.3 27L7 25.5L4.7 27L5.5 24.5L3.5 23H6Z"/></g><path d="M12.5 7.5H26M12.5 15.5H26M12.5 23.5H26" stroke="#90c4ec" stroke-width="1.8"/></svg>
<div class="t" style="left:1546px;top:629.59px;font-size:12.3px;color:#a8a8a8;transform:scaleY(1.15);transform-origin:0 80%;">Criteria</div>
<div class="t" style="right:76.5px;top:675.73px;font-size:14.5px;color:#4a4a4a;font-weight:bold;">Service provided</div>
<div class="a" style="left:1545.3px;top:683.2px;width:22.5px;height:1.2px;background:#808080;"></div>
<div class="a" style="left:1575px;top:671px;width:16px;height:24px;background:#e8e8e8;border:1px solid #d0d0d0;border-right:none;border-radius:12px 0 0 12px;"></div>
<div class="t" style="right:121.5px;top:699.73px;font-size:14.5px;color:#3c3c3c;">Department</div>
<div class="a" style="left:1461px;top:719px;width:130.7px;height:1.5px;background:#4a9ad8;"></div>
<div class="a" style="left:1461px;top:720.5px;width:130.7px;height:26.7px;background:#f0f0f0;"></div>
<div class="a" style="left:1461px;top:747.2px;width:130.7px;height:1.5px;background:#4a9ad8;"></div>
<div class="t" style="right:100px;top:756.53px;font-size:14.5px;color:#3c3c3c;">Recipient Client</div>
<div class="a" style="left:1461px;top:775.7px;width:130.7px;height:1.5px;background:#4a9ad8;"></div>
<div class="a" style="left:1461px;top:777.2px;width:130.7px;height:27px;background:#f0f0f0;"></div>
<div class="a" style="left:1461px;top:804.3px;width:130.7px;height:1.5px;background:#4a9ad8;"></div>
<div class="t" style="right:131.4000000000001px;top:813.33px;font-size:14.5px;color:#3c3c3c;">Workplace</div>
<div class="a" style="left:1461px;top:832.5px;width:130.7px;height:1.5px;background:#4a9ad8;"></div>
<div class="a" style="left:1461px;top:834px;width:130.7px;height:69px;background:#f0f0f0;"></div>
<div class="a" style="left:1591px;top:254px;width:21px;height:649px;background:#f0f0f0;"></div>
<svg class="a" style="left:1595px;top:259px;" width="14" height="12" viewBox="0 0 14 12"><path d="M2 9L7 3.5L12 9Z" fill="#666"/></svg>
<div class="a" style="left:1597px;top:276px;width:11px;height:488px;background:#cbcbcb;border-radius:5.5px;"></div>
<svg class="a" style="left:1595px;top:888px;" width="14" height="12" viewBox="0 0 14 12"><path d="M2 3L7 8.5L12 3Z" fill="#666"/></svg>
<div class="a" style="left:1591px;top:903px;width:21px;height:23px;background:#f7f7f7;"></div>
<div class="a" style="left:530px;top:491px;width:931px;height:544px;background:#f9f9f9;border-left:1.5px solid #1f63d0;border-right:1.5px solid #2f74d4;border-bottom:1.5px solid #2f74d4;"></div>
<div class="a" style="left:530px;top:491px;width:931px;height:37px;background:#2b579a;"></div>
<div class="a" style="left:530px;top:491px;width:931px;height:1px;background:#1560d0;"></div>
<div class="t" style="left:544.6px;top:506.98px;font-size:14.2px;color:#ffffff;">Management of punctual shift</div>
<svg class="a" style="left:1424px;top:498px;" width="16" height="16" viewBox="0 0 16 16"><path d="M2 2L14 14M14 2L2 14" stroke="#fff" stroke-width="1.4"/></svg>
<div class="t" style="left:557.6px;top:542.32px;font-size:13.8px;color:#4a4a4a;font-weight:bold;">Shift</div>
<div class="a" style="left:592.3px;top:549.5px;width:322px;height:1.2px;background:#7a7a7a;"></div>
<div class="a" style="left:570.9px;top:562.7px;width:115.8px;height:27px;background:#e8e8e8;border:1px solid #cfcfcf;border-radius:5px;"></div>
<svg class="a" style="left:578px;top:564px;" width="23" height="23" viewBox="0 0 23 23"><circle cx="11.2" cy="11.3" r="9.3" fill="#fff" stroke="#6ab0e0" stroke-width="1.3"/><path d="M10 6.5L14.5 11.3L10 16" fill="none" stroke="#6ab0e0" stroke-width="1.3"/></svg>
<div class="t" style="left:607px;top:570.92px;font-size:12.5px;color:#333333;transform:scaleY(1.12);transform-origin:0 80%;">Templates</div>
<div class="t" style="left:731px;top:567.25px;font-size:12.7px;color:#333333;transform:scaleY(1.1);transform-origin:0 80%;">Hours</div>
<div class="a" style="left:773.7px;top:564.9px;width:135.2px;height:22.6px;background:#0b5fb5;border-radius:11.3px;"></div>
<div class="a" style="left:885.5px;top:563.8px;width:23.5px;height:24.6px;background:#c9c9c9;border:1px solid #b0b0b0;border-radius:50%;"></div>
<div class="t" style="left:430.5px;width:800px;text-align:center;top:571.08px;font-size:12.9px;color:#ffffff;transform:scaleY(1.1);transform-origin:50% 80%;">Known</div>
<svg class="a" style="left:598.5px;top:597.7px;" width="16" height="16" viewBox="0 0 16 16"><circle cx="8" cy="8" r="6" fill="#fff" stroke="#8a8a8a" stroke-width="1"/><circle cx="8" cy="8" r="3.3" fill="#444"/></svg>
<div class="t" style="left:617.5px;top:599.13px;font-size:12.6px;color:#333333;transform:scaleY(1.1);transform-origin:0 80%;">Night</div>
<svg class="a" style="left:680.5px;top:597.7px;" width="16" height="16" viewBox="0 0 16 16"><circle cx="8" cy="8" r="6" fill="#fff" stroke="#8a8a8a" stroke-width="1"/></svg>
<div class="t" style="left:699.5px;top:599.13px;font-size:12.6px;color:#333333;transform:scaleY(1.1);transform-origin:0 80%;">Day</div>
<svg class="a" style="left:762.5px;top:597.7px;" width="16" height="16" viewBox="0 0 16 16"><circle cx="8" cy="8" r="6" fill="#fff" stroke="#8a8a8a" stroke-width="1"/></svg>
<div class="t" style="left:781.5px;top:599.13px;font-size:12.6px;color:#333333;transform:scaleY(1.1);transform-origin:0 80%;">Evening</div>
<div class="t" style="left:559.4px;top:625.55px;font-size:12.7px;color:#333333;transform:scaleY(1.1);transform-origin:0 80%;">Start</div>
<div class="t" style="left:641.3px;top:625.55px;font-size:12.7px;color:#333333;transform:scaleY(1.1);transform-origin:0 80%;">End</div>
<div class="t" style="left:723px;top:625.55px;font-size:12.7px;color:#333333;transform:scaleY(1.1);transform-origin:0 80%;">Deduction</div>
<div class="t" style="left:830.75px;top:624.25px;font-size:12.7px;color:#333333;transform:scaleY(1.1);transform-origin:0 80%;">Total</div>
<div class="a" style="left:557.6px;top:640.2px;width:73.4px;height:26.4px;background:#f7f7f7;border:1.5px solid #4a9ad8;border-radius:4px;"></div>
<div class="a" style="left:639.8px;top:640.2px;width:73.2px;height:26.4px;background:#f7f7f7;border:1.5px solid #4a9ad8;border-radius:4px;"></div>
<div class="a" style="left:721.7px;top:640.2px;width:72.9px;height:26.4px;background:#f7f7f7;border:1.5px solid #4a9ad8;border-radius:4px;"></div>
<div class="a" style="left:797.6px;top:640.5px;width:26px;height:26px;background:#f9f9f9;border:1px solid #dcdcdc;border-radius:4px;"></div>
<svg class="a" style="left:798px;top:641px;" width="26" height="26" viewBox="0 0 26 26"><g fill="none" stroke="#4a9ad8" stroke-width="1.4"><path d="M4.5 13A8.5 8.5 0 0 1 21.5 10.5"/><path d="M21.5 4.5V10.5H15.5"/><path d="M21.5 13A8.5 8.5 0 0 1 4.5 15.5"/><path d="M4.5 21.5V15.5H10.5"/></g></svg>
<div class="a" style="left:828.5px;top:640.2px;width:73.4px;height:26.4px;background:#f7f7f7;border:1.5px solid #4a9ad8;border-radius:4px;"></div>
<div class="t" style="left:570.2px;top:645.83px;font-size:12.6px;color:#333333;transform:scaleY(1.1);transform-origin:0 80%;">12:00 AM</div>
<div class="t" style="left:650.5px;top:645.83px;font-size:12.6px;color:#333333;transform:scaleY(1.1);transform-origin:0 80%;">08:00 AM</div>
<div class="t" style="right:830px;top:645.83px;font-size:12.6px;color:#333333;transform:scaleY(1.1);transform-origin:100% 80%;">00:00</div>
<div class="t" style="right:723px;top:645.83px;font-size:12.6px;color:#333333;transform:scaleY(1.1);transform-origin:100% 80%;">08:00</div>
<div class="a" style="left:558px;top:681px;width:152.4px;height:51.5px;background:#fbfbfb;border:1px solid #dadada;border-radius:5px;"></div>
<svg class="a" style="left:567px;top:686px;" width="39" height="39" viewBox="0 0 39 39"><rect x="1.5" y="1.5" width="36" height="36" fill="#fdfdfd" stroke="#333" stroke-width="1.6"/><g fill="#e8702a"><path d="M8.5 6L9.6 9H12.6L10.2 10.8L11.1 13.8L8.5 12L5.9 13.8L6.8 10.8L4.4 9H7.4Z"/><path d="M8.5 15.5L9.6 18.5H12.6L10.2 20.3L11.1 23.3L8.5 21.5L5.9 23.3L6.8 20.3L4.4 18.5H7.4Z"/><path d="M8.5 25L9.6 28H12.6L10.2 29.8L11.1 32.8L8.5 31L5.9 32.8L6.8 29.8L4.4 28H7.4Z"/></g><path d="M15.5 9.3H32M15.5 19H32M15.5 28.5H32" stroke="#2a8ad4" stroke-width="2.2"/></svg>
<div class="t" style="left:613px;top:701.01px;font-size:11.8px;color:#333333;transform:scaleY(1.2);transform-origin:0 80%;">Criteria</div>
<div class="t" style="left:937.7px;top:542.23px;font-size:13.9px;color:#4a4a4a;font-weight:bold;">Service provided</div>
<div class="a" style="left:1054.4px;top:549.5px;width:374.6px;height:1.2px;background:#7a7a7a;"></div>
<div class="t" style="left:1115px;top:568.16px;font-size:12.8px;color:#333333;transform:scaleY(1.1);transform-origin:0 80%;">Use the information from the mission</div>
<div class="a" style="left:1333.1px;top:565px;width:41px;height:18.6px;background:#0b5fb5;border-radius:9.3px;"></div>
<div class="a" style="left:1355px;top:564.5px;width:19.6px;height:19.6px;background:#c9c9c9;border:1px solid #aaa;border-radius:50%;"></div>
<div class="t" style="right:567px;top:594.68px;font-size:12.9px;color:#333333;transform:scaleY(1.1);transform-origin:100% 80%;">Department</div>
<div class="a" style="left:1057px;top:590.2px;width:320.5px;height:26.6px;background:#f7f7f7;border:1.5px solid #4a9ad8;border-radius:4px;"></div>
<div class="a" style="left:1380px;top:590.5px;width:25.3px;height:25.5px;background:#f9f9f9;border:1px solid #dcdcdc;border-radius:4px;"></div>
<svg class="a" style="left:1380px;top:590.5px;" width="26" height="26" viewBox="0 0 26 26"><g fill="none" stroke="#a8cdf0" stroke-width="1.3"><circle cx="15" cy="10.5" r="6.8"/><path d="M10.2 15.3L4 21.5"/></g></svg>
<div class="t" style="right:567px;top:625.55px;font-size:12.7px;color:#333333;transform:scaleY(1.1);transform-origin:100% 80%;">Recipient client</div>
<div class="a" style="left:1057px;top:621.5px;width:320.5px;height:26.2px;background:#f7f7f7;border:1.5px solid #4a9ad8;border-radius:4px;"></div>
<div class="t" style="left:1063.5px;top:626.00px;font-size:13px;color:#333333;transform:scaleY(1.1);transform-origin:0 80%;">Client test</div>
<div class="t" style="right:567px;top:658.68px;font-size:12.9px;color:#333333;transform:scaleY(1.1);transform-origin:100% 80%;">Workplace</div>
<div class="a" style="left:1057px;top:654.4px;width:320.5px;height:85px;background:#f7f7f7;border:1.5px solid #4a9ad8;border-radius:0px;"></div>
<div class="t" style="left:1063.5px;top:659.63px;font-size:12.6px;color:#333333;transform:scaleY(1.1);transform-origin:0 80%;">tes1</div>
<div class="t" style="left:1063.5px;top:675.13px;font-size:12.6px;color:#333333;transform:scaleY(1.1);transform-origin:0 80%;">Adresse test1</div>
<div class="t" style="left:1063.5px;top:690.63px;font-size:12.6px;color:#333333;transform:scaleY(1.1);transform-origin:0 80%;">Montréal Quebec H3P 2T4</div>
<div class="t" style="left:1063.5px;top:706.13px;font-size:12.6px;color:#333333;transform:scaleY(1.1);transform-origin:0 80%;">Canada</div>
<div class="a" style="left:1380px;top:654.7px;width:25.3px;height:25.5px;background:#f9f9f9;border:1px solid #dcdcdc;border-radius:4px;"></div>
<svg class="a" style="left:1380px;top:654.7px;" width="26" height="26" viewBox="0 0 26 26"><g fill="none" stroke="#3d7cc9" stroke-width="1.5"><circle cx="15" cy="10.5" r="6.8"/><path d="M10.2 15.3L4 21.5"/></g></svg>
<div class="a" style="left:1380px;top:684px;width:25.3px;height:25.6px;background:#f9f9f9;border:1px solid #dcdcdc;border-radius:4px;"></div>
<svg class="a" style="left:1380px;top:684px;" width="26" height="26" viewBox="0 0 26 26"><path d="M7 21.5L10.5 15.5H15.5L19 21.5Z" fill="none" stroke="#5ec48a" stroke-width="1.2"/><path d="M13 19.5L8.5 12.5A5.6 5.6 0 1 1 17.5 12.5Z" fill="#fdfdfd" stroke="#ee6a6a" stroke-width="1.2"/><circle cx="13" cy="9" r="2" fill="none" stroke="#ee6a6a" stroke-width="1.1"/></svg>
<div class="a" style="left:557.6px;top:736px;width:879.7px;height:193px;background:#fdfdfd;"></div>
<div class="a" style="left:561.0px;top:749.2px;width:172.3px;height:19px;background:#efefef;"></div>
<div class="t" style="left:245.5px;width:800px;text-align:center;top:752.24px;font-size:13.3px;color:#3a3a3a;transform:scaleY(1.05);transform-origin:50% 80%;">August 2024</div>
<div class="a" style="left:576.4px;top:786px;width:144px;height:1.5px;background:#c8c8c8;"></div>
<div class="t" style="right:1023.4px;top:771.04px;font-size:13.3px;color:#555;transform:scaleY(1.08);transform-origin:100% 80%;">Su</div>
<div class="t" style="right:1003.22px;top:771.04px;font-size:13.3px;color:#555;transform:scaleY(1.08);transform-origin:100% 80%;">Mo</div>
<div class="t" style="right:985.04px;top:771.04px;font-size:13.3px;color:#555;transform:scaleY(1.08);transform-origin:100% 80%;">Tu</div>
<div class="t" style="right:962.86px;top:771.04px;font-size:13.3px;color:#555;transform:scaleY(1.08);transform-origin:100% 80%;">We</div>
<div class="t" style="right:944.18px;top:771.04px;font-size:13.3px;color:#555;transform:scaleY(1.08);transform-origin:100% 80%;">Th</div>
<div class="t" style="right:925.0px;top:771.04px;font-size:13.3px;color:#555;transform:scaleY(1.08);transform-origin:100% 80%;">Fr</div>
<div class="t" style="right:902.3199999999999px;top:771.04px;font-size:13.3px;color:#555;transform:scaleY(1.08);transform-origin:100% 80%;">Sa</div>
<div class="t" style="right:1023.4px;top:791.74px;font-size:13.3px;color:#3a3a3a;transform:scaleY(1.08);transform-origin:100% 80%;">28</div>
<div class="t" style="right:1003.22px;top:791.74px;font-size:13.3px;color:#3a3a3a;transform:scaleY(1.08);transform-origin:100% 80%;">29</div>
<div class="t" style="right:983.04px;top:791.74px;font-size:13.3px;color:#3a3a3a;transform:scaleY(1.08);transform-origin:100% 80%;">30</div>
<div class="t" style="right:962.86px;top:791.74px;font-size:13.3px;color:#3a3a3a;transform:scaleY(1.08);transform-origin:100% 80%;">31</div>
<div class="t" style="right:942.68px;top:791.74px;font-size:13.3px;color:#3a3a3a;transform:scaleY(1.08);transform-origin:100% 80%;">1</div>
<div class="t" style="right:922.5px;top:791.74px;font-size:13.3px;color:#3a3a3a;transform:scaleY(1.08);transform-origin:100% 80%;">2</div>
<div class="t" style="right:902.3199999999999px;top:791.74px;font-size:13.3px;color:#3a3a3a;transform:scaleY(1.08);transform-origin:100% 80%;">3</div>
<div class="t" style="right:1023.4px;top:809.44px;font-size:13.3px;color:#3a3a3a;transform:scaleY(1.08);transform-origin:100% 80%;">4</div>
<div class="t" style="right:1003.22px;top:809.44px;font-size:13.3px;color:#3a3a3a;transform:scaleY(1.08);transform-origin:100% 80%;">5</div>
<div class="t" style="right:983.04px;top:809.44px;font-size:13.3px;color:#3a3a3a;transform:scaleY(1.08);transform-origin:100% 80%;">6</div>
<div class="t" style="right:962.86px;top:809.44px;font-size:13.3px;color:#3a3a3a;transform:scaleY(1.08);transform-origin:100% 80%;">7</div>
<div class="t" style="right:942.68px;top:809.44px;font-size:13.3px;color:#3a3a3a;transform:scaleY(1.08);transform-origin:100% 80%;">8</div>
<div class="t" style="right:922.5px;top:809.44px;font-size:13.3px;color:#3a3a3a;transform:scaleY(1.08);transform-origin:100% 80%;">9</div>
<div class="t" style="right:902.3199999999999px;top:809.44px;font-size:13.3px;color:#3a3a3a;transform:scaleY(1.08);transform-origin:100% 80%;">10</div>
<div class="t" style="right:1023.4px;top:827.14px;font-size:13.3px;color:#3a3a3a;transform:scaleY(1.08);transform-origin:100% 80%;">11</div>
<div class="t" style="right:1003.22px;top:827.14px;font-size:13.3px;color:#3a3a3a;transform:scaleY(1.08);transform-origin:100% 80%;">12</div>
<div class="t" style="right:983.04px;top:827.14px;font-size:13.3px;color:#3a3a3a;transform:scaleY(1.08);transform-origin:100% 80%;">13</div>
<div class="t" style="right:962.86px;top:827.14px;font-size:13.3px;color:#3a3a3a;transform:scaleY(1.08);transform-origin:100% 80%;">14</div>
<div class="t" style="right:942.68px;top:827.14px;font-size:13.3px;color:#3a3a3a;transform:scaleY(1.08);transform-origin:100% 80%;">15</div>
<div class="t" style="right:922.5px;top:827.14px;font-size:13.3px;color:#3a3a3a;transform:scaleY(1.08);transform-origin:100% 80%;">16</div>
<div class="t" style="right:902.3199999999999px;top:827.14px;font-size:13.3px;color:#3a3a3a;transform:scaleY(1.08);transform-origin:100% 80%;">17</div>
<div class="t" style="right:1023.4px;top:844.84px;font-size:13.3px;color:#3a3a3a;transform:scaleY(1.08);transform-origin:100% 80%;">18</div>
<div class="t" style="right:1003.22px;top:844.84px;font-size:13.3px;color:#3a3a3a;transform:scaleY(1.08);transform-origin:100% 80%;">19</div>
<div class="t" style="right:983.04px;top:844.84px;font-size:13.3px;color:#3a3a3a;transform:scaleY(1.08);transform-origin:100% 80%;">20</div>
<div class="t" style="right:962.86px;top:844.84px;font-size:13.3px;color:#3a3a3a;transform:scaleY(1.08);transform-origin:100% 80%;">21</div>
<div class="t" style="right:942.68px;top:844.84px;font-size:13.3px;color:#3a3a3a;transform:scaleY(1.08);transform-origin:100% 80%;">22</div>
<div class="t" style="right:922.5px;top:844.84px;font-size:13.3px;color:#3a3a3a;transform:scaleY(1.08);transform-origin:100% 80%;">23</div>
<div class="t" style="right:902.3199999999999px;top:844.84px;font-size:13.3px;color:#3a3a3a;transform:scaleY(1.08);transform-origin:100% 80%;">24</div>
<div class="t" style="right:1023.4px;top:862.54px;font-size:13.3px;color:#3a3a3a;transform:scaleY(1.08);transform-origin:100% 80%;">25</div>
<div class="t" style="right:1003.22px;top:862.54px;font-size:13.3px;color:#3a3a3a;transform:scaleY(1.08);transform-origin:100% 80%;">26</div>
<div class="t" style="right:983.04px;top:862.54px;font-size:13.3px;color:#3a3a3a;transform:scaleY(1.08);transform-origin:100% 80%;">27</div>
<div class="t" style="right:962.86px;top:862.54px;font-size:13.3px;color:#3a3a3a;transform:scaleY(1.08);transform-origin:100% 80%;">28</div>
<div class="t" style="right:942.68px;top:862.54px;font-size:13.3px;color:#3a3a3a;transform:scaleY(1.08);transform-origin:100% 80%;">29</div>
<div class="t" style="right:922.5px;top:862.54px;font-size:13.3px;color:#3a3a3a;transform:scaleY(1.08);transform-origin:100% 80%;">30</div>
<div class="t" style="right:902.3199999999999px;top:862.54px;font-size:13.3px;color:#3a3a3a;transform:scaleY(1.08);transform-origin:100% 80%;">31</div>
<div class="a" style="left:735.9px;top:749.2px;width:172.3px;height:19px;background:#efefef;"></div>
<div class="t" style="left:420.4px;width:800px;text-align:center;top:752.24px;font-size:13.3px;color:#3a3a3a;transform:scaleY(1.05);transform-origin:50% 80%;">September 2024</div>
<div class="a" style="left:751.3px;top:786px;width:144px;height:1.5px;background:#c8c8c8;"></div>
<div class="t" style="right:848.5px;top:771.04px;font-size:13.3px;color:#555;transform:scaleY(1.08);transform-origin:100% 80%;">Su</div>
<div class="t" style="right:828.32px;top:771.04px;font-size:13.3px;color:#555;transform:scaleY(1.08);transform-origin:100% 80%;">Mo</div>
<div class="t" style="right:810.14px;top:771.04px;font-size:13.3px;color:#555;transform:scaleY(1.08);transform-origin:100% 80%;">Tu</div>
<div class="t" style="right:787.96px;top:771.04px;font-size:13.3px;color:#555;transform:scaleY(1.08);transform-origin:100% 80%;">We</div>
<div class="t" style="right:769.28px;top:771.04px;font-size:13.3px;color:#555;transform:scaleY(1.08);transform-origin:100% 80%;">Th</div>
<div class="t" style="right:750.1px;top:771.04px;font-size:13.3px;color:#555;transform:scaleY(1.08);transform-origin:100% 80%;">Fr</div>
<div class="t" style="right:727.42px;top:771.04px;font-size:13.3px;color:#555;transform:scaleY(1.08);transform-origin:100% 80%;">Sa</div>
<div class="t" style="right:848.5px;top:791.74px;font-size:13.3px;color:#3a3a3a;transform:scaleY(1.08);transform-origin:100% 80%;">1</div>
<div class="t" style="right:828.32px;top:791.74px;font-size:13.3px;color:#3a3a3a;transform:scaleY(1.08);transform-origin:100% 80%;">2</div>
<div class="t" style="right:808.14px;top:791.74px;font-size:13.3px;color:#3a3a3a;transform:scaleY(1.08);transform-origin:100% 80%;">3</div>
<div class="t" style="right:787.96px;top:791.74px;font-size:13.3px;color:#3a3a3a;transform:scaleY(1.08);transform-origin:100% 80%;">4</div>
<div class="t" style="right:767.78px;top:791.74px;font-size:13.3px;color:#3a3a3a;transform:scaleY(1.08);transform-origin:100% 80%;">5</div>
<div class="t" style="right:747.6px;top:791.74px;font-size:13.3px;color:#3a3a3a;transform:scaleY(1.08);transform-origin:100% 80%;">6</div>
<div class="t" style="right:727.42px;top:791.74px;font-size:13.3px;color:#3a3a3a;transform:scaleY(1.08);transform-origin:100% 80%;">7</div>
<div class="t" style="right:848.5px;top:809.44px;font-size:13.3px;color:#3a3a3a;transform:scaleY(1.08);transform-origin:100% 80%;">8</div>
<div class="t" style="right:828.32px;top:809.44px;font-size:13.3px;color:#3a3a3a;transform:scaleY(1.08);transform-origin:100% 80%;">9</div>
<div class="t" style="right:808.14px;top:809.44px;font-size:13.3px;color:#3a3a3a;transform:scaleY(1.08);transform-origin:100% 80%;">10</div>
<div class="t" style="right:787.96px;top:809.44px;font-size:13.3px;color:#3a3a3a;transform:scaleY(1.08);transform-origin:100% 80%;">11</div>
<div class="t" style="right:767.78px;top:809.44px;font-size:13.3px;color:#3a3a3a;transform:scaleY(1.08);transform-origin:100% 80%;">12</div>
<div class="t" style="right:747.6px;top:809.44px;font-size:13.3px;color:#3a3a3a;transform:scaleY(1.08);transform-origin:100% 80%;">13</div>
<div class="t" style="right:727.42px;top:809.44px;font-size:13.3px;color:#3a3a3a;transform:scaleY(1.08);transform-origin:100% 80%;">14</div>
<div class="t" style="right:848.5px;top:827.14px;font-size:13.3px;color:#3a3a3a;transform:scaleY(1.08);transform-origin:100% 80%;">15</div>
<div class="t" style="right:828.32px;top:827.14px;font-size:13.3px;color:#3a3a3a;transform:scaleY(1.08);transform-origin:100% 80%;">16</div>
<div class="t" style="right:808.14px;top:827.14px;font-size:13.3px;color:#3a3a3a;transform:scaleY(1.08);transform-origin:100% 80%;">17</div>
<div class="t" style="right:787.96px;top:827.14px;font-size:13.3px;color:#3a3a3a;transform:scaleY(1.08);transform-origin:100% 80%;">18</div>
<div class="t" style="right:767.78px;top:827.14px;font-size:13.3px;color:#3a3a3a;transform:scaleY(1.08);transform-origin:100% 80%;">19</div>
<div class="t" style="right:747.6px;top:827.14px;font-size:13.3px;color:#3a3a3a;transform:scaleY(1.08);transform-origin:100% 80%;">20</div>
<div class="t" style="right:727.42px;top:827.14px;font-size:13.3px;color:#3a3a3a;transform:scaleY(1.08);transform-origin:100% 80%;">21</div>
<div class="t" style="right:848.5px;top:844.84px;font-size:13.3px;color:#3a3a3a;transform:scaleY(1.08);transform-origin:100% 80%;">22</div>
<div class="t" style="right:828.32px;top:844.84px;font-size:13.3px;color:#3a3a3a;transform:scaleY(1.08);transform-origin:100% 80%;">23</div>
<div class="t" style="right:808.14px;top:844.84px;font-size:13.3px;color:#3a3a3a;transform:scaleY(1.08);transform-origin:100% 80%;">24</div>
<div class="t" style="right:787.96px;top:844.84px;font-size:13.3px;color:#3a3a3a;transform:scaleY(1.08);transform-origin:100% 80%;">25</div>
<div class="t" style="right:767.78px;top:844.84px;font-size:13.3px;color:#3a3a3a;transform:scaleY(1.08);transform-origin:100% 80%;">26</div>
<div class="t" style="right:747.6px;top:844.84px;font-size:13.3px;color:#3a3a3a;transform:scaleY(1.08);transform-origin:100% 80%;">27</div>
<div class="t" style="right:727.42px;top:844.84px;font-size:13.3px;color:#3a3a3a;transform:scaleY(1.08);transform-origin:100% 80%;">28</div>
<div class="t" style="right:848.5px;top:862.54px;font-size:13.3px;color:#3a3a3a;transform:scaleY(1.08);transform-origin:100% 80%;">29</div>
<div class="t" style="right:828.32px;top:862.54px;font-size:13.3px;color:#3a3a3a;transform:scaleY(1.08);transform-origin:100% 80%;">30</div>
<div class="a" style="left:910.8px;top:749.2px;width:172.3px;height:19px;background:#efefef;"></div>
<div class="t" style="left:595.3px;width:800px;text-align:center;top:752.24px;font-size:13.3px;color:#3a3a3a;transform:scaleY(1.05);transform-origin:50% 80%;">October 2024</div>
<div class="a" style="left:926.1999999999999px;top:786px;width:144px;height:1.5px;background:#c8c8c8;"></div>
<div class="t" style="right:673.6px;top:771.04px;font-size:13.3px;color:#555;transform:scaleY(1.08);transform-origin:100% 80%;">Su</div>
<div class="t" style="right:653.4200000000001px;top:771.04px;font-size:13.3px;color:#555;transform:scaleY(1.08);transform-origin:100% 80%;">Mo</div>
<div class="t" style="right:635.24px;top:771.04px;font-size:13.3px;color:#555;transform:scaleY(1.08);transform-origin:100% 80%;">Tu</div>
<div class="t" style="right:613.0600000000001px;top:771.04px;font-size:13.3px;color:#555;transform:scaleY(1.08);transform-origin:100% 80%;">We</div>
<div class="t" style="right:594.3800000000001px;top:771.04px;font-size:13.3px;color:#555;transform:scaleY(1.08);transform-origin:100% 80%;">Th</div>
<div class="t" style="right:575.2px;top:771.04px;font-size:13.3px;color:#555;transform:scaleY(1.08);transform-origin:100% 80%;">Fr</div>
<div class="t" style="right:552.52px;top:771.04px;font-size:13.3px;color:#555;transform:scaleY(1.08);transform-origin:100% 80%;">Sa</div>
<div class="t" style="right:633.24px;top:791.74px;font-size:13.3px;color:#3a3a3a;transform:scaleY(1.08);transform-origin:100% 80%;">1</div>
<div class="t" style="right:613.0600000000001px;top:791.74px;font-size:13.3px;color:#3a3a3a;transform:scaleY(1.08);transform-origin:100% 80%;">2</div>
<div class="t" style="right:592.8800000000001px;top:791.74px;font-size:13.3px;color:#3a3a3a;transform:scaleY(1.08);transform-origin:100% 80%;">3</div>
<div class="t" style="right:572.7px;top:791.74px;font-size:13.3px;color:#3a3a3a;transform:scaleY(1.08);transform-origin:100% 80%;">4</div>
<div class="t" style="right:552.52px;top:791.74px;font-size:13.3px;color:#3a3a3a;transform:scaleY(1.08);transform-origin:100% 80%;">5</div>
<div class="t" style="right:673.6px;top:809.44px;font-size:13.3px;color:#3a3a3a;transform:scaleY(1.08);transform-origin:100% 80%;">6</div>
<div class="t" style="right:653.4200000000001px;top:809.44px;font-size:13.3px;color:#3a3a3a;transform:scaleY(1.08);transform-origin:100% 80%;">7</div>
<div class="t" style="right:633.24px;top:809.44px;font-size:13.3px;color:#3a3a3a;transform:scaleY(1.08);transform-origin:100% 80%;">8</div>
<div class="t" style="right:613.0600000000001px;top:809.44px;font-size:13.3px;color:#3a3a3a;transform:scaleY(1.08);transform-origin:100% 80%;">9</div>
<div class="t" style="right:592.8800000000001px;top:809.44px;font-size:13.3px;color:#3a3a3a;transform:scaleY(1.08);transform-origin:100% 80%;">10</div>
<div class="t" style="right:572.7px;top:809.44px;font-size:13.3px;color:#3a3a3a;transform:scaleY(1.08);transform-origin:100% 80%;">11</div>
<div class="t" style="right:552.52px;top:809.44px;font-size:13.3px;color:#3a3a3a;transform:scaleY(1.08);transform-origin:100% 80%;">12</div>
<div class="t" style="right:673.6px;top:827.14px;font-size:13.3px;color:#3a3a3a;transform:scaleY(1.08);transform-origin:100% 80%;">13</div>
<div class="t" style="right:653.4200000000001px;top:827.14px;font-size:13.3px;color:#3a3a3a;transform:scaleY(1.08);transform-origin:100% 80%;">14</div>
<div class="t" style="right:633.24px;top:827.14px;font-size:13.3px;color:#3a3a3a;transform:scaleY(1.08);transform-origin:100% 80%;">15</div>
<div class="t" style="right:613.0600000000001px;top:827.14px;font-size:13.3px;color:#3a3a3a;transform:scaleY(1.08);transform-origin:100% 80%;">16</div>
<div class="t" style="right:592.8800000000001px;top:827.14px;font-size:13.3px;color:#3a3a3a;transform:scaleY(1.08);transform-origin:100% 80%;">17</div>
<div class="t" style="right:572.7px;top:827.14px;font-size:13.3px;color:#3a3a3a;transform:scaleY(1.08);transform-origin:100% 80%;">18</div>
<div class="t" style="right:552.52px;top:827.14px;font-size:13.3px;color:#3a3a3a;transform:scaleY(1.08);transform-origin:100% 80%;">19</div>
<div class="t" style="right:673.6px;top:844.84px;font-size:13.3px;color:#3a3a3a;transform:scaleY(1.08);transform-origin:100% 80%;">20</div>
<div class="t" style="right:653.4200000000001px;top:844.84px;font-size:13.3px;color:#3a3a3a;transform:scaleY(1.08);transform-origin:100% 80%;">21</div>
<div class="t" style="right:633.24px;top:844.84px;font-size:13.3px;color:#3a3a3a;transform:scaleY(1.08);transform-origin:100% 80%;">22</div>
<div class="t" style="right:613.0600000000001px;top:844.84px;font-size:13.3px;color:#3a3a3a;transform:scaleY(1.08);transform-origin:100% 80%;">23</div>
<div class="t" style="right:592.8800000000001px;top:844.84px;font-size:13.3px;color:#3a3a3a;transform:scaleY(1.08);transform-origin:100% 80%;">24</div>
<div class="t" style="right:572.7px;top:844.84px;font-size:13.3px;color:#3a3a3a;transform:scaleY(1.08);transform-origin:100% 80%;">25</div>
<div class="t" style="right:552.52px;top:844.84px;font-size:13.3px;color:#3a3a3a;transform:scaleY(1.08);transform-origin:100% 80%;">26</div>
<div class="t" style="right:673.6px;top:862.54px;font-size:13.3px;color:#3a3a3a;transform:scaleY(1.08);transform-origin:100% 80%;">27</div>
<div class="t" style="right:653.4200000000001px;top:862.54px;font-size:13.3px;color:#3a3a3a;transform:scaleY(1.08);transform-origin:100% 80%;">28</div>
<div class="t" style="right:633.24px;top:862.54px;font-size:13.3px;color:#3a3a3a;transform:scaleY(1.08);transform-origin:100% 80%;">29</div>
<div class="t" style="right:613.0600000000001px;top:862.54px;font-size:13.3px;color:#3a3a3a;transform:scaleY(1.08);transform-origin:100% 80%;">30</div>
<div class="t" style="right:592.8800000000001px;top:862.54px;font-size:13.3px;color:#3a3a3a;transform:scaleY(1.08);transform-origin:100% 80%;">31</div>
<div class="a" style="left:1085.7px;top:749.2px;width:172.3px;height:19px;background:#efefef;"></div>
<div class="t" style="left:770.2px;width:800px;text-align:center;top:752.24px;font-size:13.3px;color:#3a3a3a;transform:scaleY(1.05);transform-origin:50% 80%;">November 2024</div>
<div class="a" style="left:1101.1000000000001px;top:786px;width:144px;height:1.5px;background:#c8c8c8;"></div>
<div class="t" style="right:498.70000000000005px;top:771.04px;font-size:13.3px;color:#555;transform:scaleY(1.08);transform-origin:100% 80%;">Su</div>
<div class="t" style="right:478.52px;top:771.04px;font-size:13.3px;color:#555;transform:scaleY(1.08);transform-origin:100% 80%;">Mo</div>
<div class="t" style="right:460.34000000000015px;top:771.04px;font-size:13.3px;color:#555;transform:scaleY(1.08);transform-origin:100% 80%;">Tu</div>
<div class="t" style="right:438.1600000000001px;top:771.04px;font-size:13.3px;color:#555;transform:scaleY(1.08);transform-origin:100% 80%;">We</div>
<div class="t" style="right:419.48px;top:771.04px;font-size:13.3px;color:#555;transform:scaleY(1.08);transform-origin:100% 80%;">Th</div>
<div class="t" style="right:400.29999999999995px;top:771.04px;font-size:13.3px;color:#555;transform:scaleY(1.08);transform-origin:100% 80%;">Fr</div>
<div class="t" style="right:377.6200000000001px;top:771.04px;font-size:13.3px;color:#555;transform:scaleY(1.08);transform-origin:100% 80%;">Sa</div>
<div class="t" style="right:397.79999999999995px;top:791.74px;font-size:13.3px;color:#3a3a3a;transform:scaleY(1.08);transform-origin:100% 80%;">1</div>
<div class="t" style="right:377.6200000000001px;top:791.74px;font-size:13.3px;color:#3a3a3a;transform:scaleY(1.08);transform-origin:100% 80%;">2</div>
<div class="t" style="right:498.70000000000005px;top:809.44px;font-size:13.3px;color:#3a3a3a;transform:scaleY(1.08);transform-origin:100% 80%;">3</div>
<div class="t" style="right:478.52px;top:809.44px;font-size:13.3px;color:#3a3a3a;transform:scaleY(1.08);transform-origin:100% 80%;">4</div>
<div class="t" style="right:458.34000000000015px;top:809.44px;font-size:13.3px;color:#3a3a3a;transform:scaleY(1.08);transform-origin:100% 80%;">5</div>
<div class="t" style="right:438.1600000000001px;top:809.44px;font-size:13.3px;color:#3a3a3a;transform:scaleY(1.08);transform-origin:100% 80%;">6</div>
<div class="t" style="right:417.98px;top:809.44px;font-size:13.3px;color:#3a3a3a;transform:scaleY(1.08);transform-origin:100% 80%;">7</div>
<div class="t" style="right:397.79999999999995px;top:809.44px;font-size:13.3px;color:#3a3a3a;transform:scaleY(1.08);transform-origin:100% 80%;">8</div>
<div class="t" style="right:377.6200000000001px;top:809.44px;font-size:13.3px;color:#3a3a3a;transform:scaleY(1.08);transform-origin:100% 80%;">9</div>
<div class="t" style="right:498.70000000000005px;top:827.14px;font-size:13.3px;color:#3a3a3a;transform:scaleY(1.08);transform-origin:100% 80%;">10</div>
<div class="t" style="right:478.52px;top:827.14px;font-size:13.3px;color:#3a3a3a;transform:scaleY(1.08);transform-origin:100% 80%;">11</div>
<div class="t" style="right:458.34000000000015px;top:827.14px;font-size:13.3px;color:#3a3a3a;transform:scaleY(1.08);transform-origin:100% 80%;">12</div>
<div class="t" style="right:438.1600000000001px;top:827.14px;font-size:13.3px;color:#3a3a3a;transform:scaleY(1.08);transform-origin:100% 80%;">13</div>
<div class="t" style="right:417.98px;top:827.14px;font-size:13.3px;color:#3a3a3a;transform:scaleY(1.08);transform-origin:100% 80%;">14</div>
<div class="t" style="right:397.79999999999995px;top:827.14px;font-size:13.3px;color:#3a3a3a;transform:scaleY(1.08);transform-origin:100% 80%;">15</div>
<div class="t" style="right:377.6200000000001px;top:827.14px;font-size:13.3px;color:#3a3a3a;transform:scaleY(1.08);transform-origin:100% 80%;">16</div>
<div class="t" style="right:498.70000000000005px;top:844.84px;font-size:13.3px;color:#3a3a3a;transform:scaleY(1.08);transform-origin:100% 80%;">17</div>
<div class="t" style="right:478.52px;top:844.84px;font-size:13.3px;color:#3a3a3a;transform:scaleY(1.08);transform-origin:100% 80%;">18</div>
<div class="t" style="right:458.34000000000015px;top:844.84px;font-size:13.3px;color:#3a3a3a;transform:scaleY(1.08);transform-origin:100% 80%;">19</div>
<div class="t" style="right:438.1600000000001px;top:844.84px;font-size:13.3px;color:#3a3a3a;transform:scaleY(1.08);transform-origin:100% 80%;">20</div>
<div class="t" style="right:417.98px;top:844.84px;font-size:13.3px;color:#3a3a3a;transform:scaleY(1.08);transform-origin:100% 80%;">21</div>
<div class="t" style="right:397.79999999999995px;top:844.84px;font-size:13.3px;color:#3a3a3a;transform:scaleY(1.08);transform-origin:100% 80%;">22</div>
<div class="t" style="right:377.6200000000001px;top:844.84px;font-size:13.3px;color:#3a3a3a;transform:scaleY(1.08);transform-origin:100% 80%;">23</div>
<div class="t" style="right:498.70000000000005px;top:862.54px;font-size:13.3px;color:#3a3a3a;transform:scaleY(1.08);transform-origin:100% 80%;">24</div>
<div class="t" style="right:478.52px;top:862.54px;font-size:13.3px;color:#3a3a3a;transform:scaleY(1.08);transform-origin:100% 80%;">25</div>
<div class="t" style="right:458.34000000000015px;top:862.54px;font-size:13.3px;color:#3a3a3a;transform:scaleY(1.08);transform-origin:100% 80%;">26</div>
<div class="t" style="right:438.1600000000001px;top:862.54px;font-size:13.3px;color:#3a3a3a;transform:scaleY(1.08);transform-origin:100% 80%;">27</div>
<div class="t" style="right:417.98px;top:862.54px;font-size:13.3px;color:#3a3a3a;transform:scaleY(1.08);transform-origin:100% 80%;">28</div>
<div class="t" style="right:397.79999999999995px;top:862.54px;font-size:13.3px;color:#3a3a3a;transform:scaleY(1.08);transform-origin:100% 80%;">29</div>
<div class="t" style="right:377.6200000000001px;top:862.54px;font-size:13.3px;color:#3a3a3a;transform:scaleY(1.08);transform-origin:100% 80%;">30</div>
<div class="a" style="left:1260.6px;top:749.2px;width:172.3px;height:19px;background:#efefef;"></div>
<div class="t" style="left:945.0999999999999px;width:800px;text-align:center;top:752.24px;font-size:13.3px;color:#3a3a3a;transform:scaleY(1.05);transform-origin:50% 80%;">December 2024</div>
<div class="a" style="left:1276.0px;top:786px;width:144px;height:1.5px;background:#c8c8c8;"></div>
<div class="t" style="right:323.8000000000002px;top:771.04px;font-size:13.3px;color:#555;transform:scaleY(1.08);transform-origin:100% 80%;">Su</div>
<div class="t" style="right:303.6200000000001px;top:771.04px;font-size:13.3px;color:#555;transform:scaleY(1.08);transform-origin:100% 80%;">Mo</div>
<div class="t" style="right:285.4400000000003px;top:771.04px;font-size:13.3px;color:#555;transform:scaleY(1.08);transform-origin:100% 80%;">Tu</div>
<div class="t" style="right:263.2600000000002px;top:771.04px;font-size:13.3px;color:#555;transform:scaleY(1.08);transform-origin:100% 80%;">We</div>
<div class="t" style="right:244.58000000000015px;top:771.04px;font-size:13.3px;color:#555;transform:scaleY(1.08);transform-origin:100% 80%;">Th</div>
<div class="t" style="right:225.4000000000001px;top:771.04px;font-size:13.3px;color:#555;transform:scaleY(1.08);transform-origin:100% 80%;">Fr</div>
<div class="t" style="right:202.72000000000025px;top:771.04px;font-size:13.3px;color:#555;transform:scaleY(1.08);transform-origin:100% 80%;">Sa</div>
<div class="t" style="right:323.8000000000002px;top:791.74px;font-size:13.3px;color:#3a3a3a;transform:scaleY(1.08);transform-origin:100% 80%;">1</div>
<div class="t" style="right:303.6200000000001px;top:791.74px;font-size:13.3px;color:#3a3a3a;transform:scaleY(1.08);transform-origin:100% 80%;">2</div>
<div class="t" style="right:283.4400000000003px;top:791.74px;font-size:13.3px;color:#3a3a3a;transform:scaleY(1.08);transform-origin:100% 80%;">3</div>
<div class="t" style="right:263.2600000000002px;top:791.74px;font-size:13.3px;color:#3a3a3a;transform:scaleY(1.08);transform-origin:100% 80%;">4</div>
<div class="t" style="right:243.08000000000015px;top:791.74px;font-size:13.3px;color:#3a3a3a;transform:scaleY(1.08);transform-origin:100% 80%;">5</div>
<div class="t" style="right:222.9000000000001px;top:791.74px;font-size:13.3px;color:#3a3a3a;transform:scaleY(1.08);transform-origin:100% 80%;">6</div>
<div class="t" style="right:202.72000000000025px;top:791.74px;font-size:13.3px;color:#3a3a3a;transform:scaleY(1.08);transform-origin:100% 80%;">7</div>
<div class="t" style="right:323.8000000000002px;top:809.44px;font-size:13.3px;color:#3a3a3a;transform:scaleY(1.08);transform-origin:100% 80%;">8</div>
<div class="t" style="right:303.6200000000001px;top:809.44px;font-size:13.3px;color:#3a3a3a;transform:scaleY(1.08);transform-origin:100% 80%;">9</div>
<div class="t" style="right:283.4400000000003px;top:809.44px;font-size:13.3px;color:#3a3a3a;transform:scaleY(1.08);transform-origin:100% 80%;">10</div>
<div class="t" style="right:263.2600000000002px;top:809.44px;font-size:13.3px;color:#3a3a3a;transform:scaleY(1.08);transform-origin:100% 80%;">11</div>
<div class="t" style="right:243.08000000000015px;top:809.44px;font-size:13.3px;color:#3a3a3a;transform:scaleY(1.08);transform-origin:100% 80%;">12</div>
<div class="t" style="right:222.9000000000001px;top:809.44px;font-size:13.3px;color:#3a3a3a;transform:scaleY(1.08);transform-origin:100% 80%;">13</div>
<div class="t" style="right:202.72000000000025px;top:809.44px;font-size:13.3px;color:#3a3a3a;transform:scaleY(1.08);transform-origin:100% 80%;">14</div>
<div class="t" style="right:323.8000000000002px;top:827.14px;font-size:13.3px;color:#3a3a3a;transform:scaleY(1.08);transform-origin:100% 80%;">15</div>
<div class="t" style="right:303.6200000000001px;top:827.14px;font-size:13.3px;color:#3a3a3a;transform:scaleY(1.08);transform-origin:100% 80%;">16</div>
<div class="t" style="right:283.4400000000003px;top:827.14px;font-size:13.3px;color:#3a3a3a;transform:scaleY(1.08);transform-origin:100% 80%;">17</div>
<div class="t" style="right:263.2600000000002px;top:827.14px;font-size:13.3px;color:#3a3a3a;transform:scaleY(1.08);transform-origin:100% 80%;">18</div>
<div class="t" style="right:243.08000000000015px;top:827.14px;font-size:13.3px;color:#3a3a3a;transform:scaleY(1.08);transform-origin:100% 80%;">19</div>
<div class="t" style="right:222.9000000000001px;top:827.14px;font-size:13.3px;color:#3a3a3a;transform:scaleY(1.08);transform-origin:100% 80%;">20</div>
<div class="t" style="right:202.72000000000025px;top:827.14px;font-size:13.3px;color:#3a3a3a;transform:scaleY(1.08);transform-origin:100% 80%;">21</div>
<div class="t" style="right:323.8000000000002px;top:844.84px;font-size:13.3px;color:#3a3a3a;transform:scaleY(1.08);transform-origin:100% 80%;">22</div>
<div class="t" style="right:303.6200000000001px;top:844.84px;font-size:13.3px;color:#3a3a3a;transform:scaleY(1.08);transform-origin:100% 80%;">23</div>
<div class="t" style="right:283.4400000000003px;top:844.84px;font-size:13.3px;color:#3a3a3a;transform:scaleY(1.08);transform-origin:100% 80%;">24</div>
<div class="t" style="right:263.2600000000002px;top:844.84px;font-size:13.3px;color:#3a3a3a;transform:scaleY(1.08);transform-origin:100% 80%;">25</div>
<div class="t" style="right:243.08000000000015px;top:844.84px;font-size:13.3px;color:#3a3a3a;transform:scaleY(1.08);transform-origin:100% 80%;">26</div>
<div class="t" style="right:222.9000000000001px;top:844.84px;font-size:13.3px;color:#3a3a3a;transform:scaleY(1.08);transform-origin:100% 80%;">27</div>
<div class="t" style="right:202.72000000000025px;top:844.84px;font-size:13.3px;color:#3a3a3a;transform:scaleY(1.08);transform-origin:100% 80%;">28</div>
<div class="t" style="right:323.8000000000002px;top:862.54px;font-size:13.3px;color:#3a3a3a;transform:scaleY(1.08);transform-origin:100% 80%;">29</div>
<div class="t" style="right:303.6200000000001px;top:862.54px;font-size:13.3px;color:#3a3a3a;transform:scaleY(1.08);transform-origin:100% 80%;">30</div>
<div class="t" style="right:283.4400000000003px;top:862.54px;font-size:13.3px;color:#3a3a3a;transform:scaleY(1.08);transform-origin:100% 80%;">31</div>
<div class="t" style="right:263.2600000000002px;top:862.54px;font-size:13.3px;color:#3a3a3a;transform:scaleY(1.08);transform-origin:100% 80%;">1</div>
<div class="t" style="right:243.08000000000015px;top:862.54px;font-size:13.3px;color:#3a3a3a;transform:scaleY(1.08);transform-origin:100% 80%;">2</div>
<div class="t" style="right:222.9000000000001px;top:862.54px;font-size:13.3px;color:#3a3a3a;transform:scaleY(1.08);transform-origin:100% 80%;">3</div>
<div class="t" style="right:202.72000000000025px;top:862.54px;font-size:13.3px;color:#3a3a3a;transform:scaleY(1.08);transform-origin:100% 80%;">4</div>
<div class="t" style="right:323.8000000000002px;top:880.24px;font-size:13.3px;color:#3a3a3a;transform:scaleY(1.08);transform-origin:100% 80%;">5</div>
<div class="t" style="right:303.6200000000001px;top:880.24px;font-size:13.3px;color:#3a3a3a;transform:scaleY(1.08);transform-origin:100% 80%;">6</div>
<div class="t" style="right:283.4400000000003px;top:880.24px;font-size:13.3px;color:#3a3a3a;transform:scaleY(1.08);transform-origin:100% 80%;">7</div>
<div class="t" style="right:263.2600000000002px;top:880.24px;font-size:13.3px;color:#3a3a3a;transform:scaleY(1.08);transform-origin:100% 80%;">8</div>
<div class="t" style="right:243.08000000000015px;top:880.24px;font-size:13.3px;color:#3a3a3a;transform:scaleY(1.08);transform-origin:100% 80%;">9</div>
<div class="t" style="right:222.9000000000001px;top:880.24px;font-size:13.3px;color:#3a3a3a;transform:scaleY(1.08);transform-origin:100% 80%;">10</div>
<div class="t" style="right:202.72000000000025px;top:880.24px;font-size:13.3px;color:#3a3a3a;transform:scaleY(1.08);transform-origin:100% 80%;">11</div>
<div class="a" style="left:657.5px;top:842.2px;width:20.2px;height:17.4px;border:1.5px solid #3a70c8;"></div>
<svg class="a" style="left:563px;top:750px;" width="12" height="14" viewBox="0 0 12 14"><path d="M8.5 3L3.5 7L8.5 11Z" fill="#555"/></svg>
<svg class="a" style="left:1418px;top:750px;" width="12" height="14" viewBox="0 0 12 14"><path d="M3.5 3L8.5 7L3.5 11Z" fill="#555"/></svg>
<div class="a" style="left:1034.9px;top:963.4px;width:195.1px;height:51.5px;background:#f9f9f9;border:1px solid #d8d8d8;border-radius:5px;"></div>
<svg class="a" style="left:1042px;top:967px;" width="42" height="42" viewBox="0 0 42 42"><g fill="none" stroke="#2aa84e" stroke-width="1.6"><circle cx="20.5" cy="21" r="18.2"/><path d="M8.5 21H32.5M20.5 9V33"/></g></svg>
<div class="t" style="left:1090px;top:983.33px;font-size:12.6px;color:#333333;transform:scaleY(1.15);transform-origin:0 80%;">Add</div>
<div class="a" style="left:1242.7px;top:963.4px;width:195.3px;height:51.5px;background:#f9f9f9;border:1px solid #d8d8d8;border-radius:5px;"></div>
<svg class="a" style="left:1250px;top:967px;" width="46" height="46" viewBox="0 0 46 46"><g fill="none" stroke="#2aa84e" stroke-width="1.6"><circle cx="20.3" cy="21" r="18.2"/><path d="M8.3 21H32.3M20.3 9V33"/></g><circle cx="31.4" cy="32" r="9.6" fill="#fdfdfd" stroke="#e8454a" stroke-width="1.5"/><path d="M27.4 28L35.4 36M35.4 28L27.4 36" stroke="#e8454a" stroke-width="1.5"/></svg>
<div class="t" style="left:1298px;top:983.33px;font-size:12.6px;color:#333333;transform:scaleY(1.15);transform-origin:0 80%;">Add and close</div>
<svg class="a" style="left:745px;top:460px;" width="40" height="60" viewBox="0 0 40 60"><path d="M10 8L23.5 43" stroke="#f84040" stroke-width="4.2"/><path d="M16.2 45.5L27.8 40L26.6 53.6Z" fill="#f84040" stroke="#f84040" stroke-width="1"/></svg>
</body></html>
